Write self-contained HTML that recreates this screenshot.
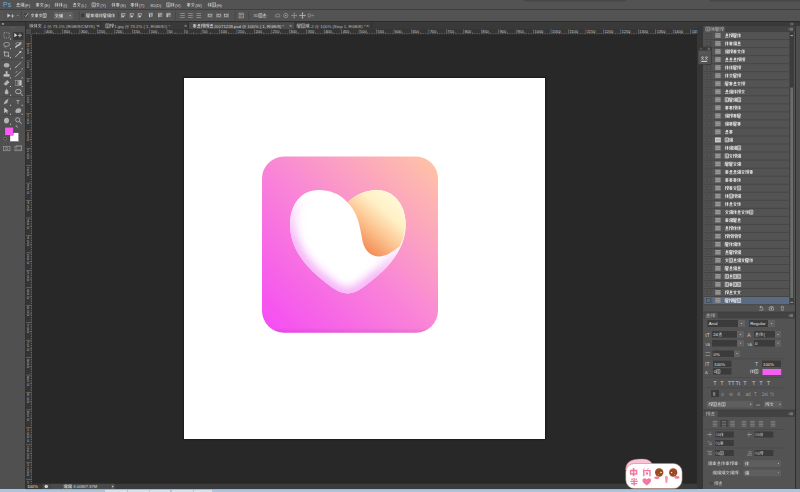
<!DOCTYPE html><html><head><meta charset="utf-8"><style>
html,body{margin:0;padding:0;}
body{width:800px;height:492px;overflow:hidden;position:relative;background:#282828;font-family:"Liberation Sans",sans-serif;}
div{position:absolute;box-sizing:border-box;}
svg{position:absolute;left:0;top:0;}
text{font-family:"Liberation Sans",sans-serif;}
</style></head><body>
<div style="left:0px;top:0px;width:800px;height:9.4px;background:#535353"></div>
<div style="left:0px;top:9.4px;width:800px;height:0.9px;background:#3f3f3f"></div>
<div style="left:0px;top:10.3px;width:800px;height:11px;background:#535353"></div>
<div style="left:0px;top:21.3px;width:800px;height:0.8px;background:#2c2c2c"></div>
<div style="left:0px;top:22px;width:25.2px;height:467.5px;background:#505050"></div>
<div style="left:0px;top:22px;width:25.2px;height:3.6px;background:#3a3a3a"></div>
<div style="left:25.2px;top:22px;width:0.8px;height:467.5px;background:#2f2f2f"></div>
<div style="left:26px;top:22px;width:671px;height:7px;background:#393939"></div>
<div style="left:26px;top:29px;width:5.3px;height:5.4px;background:#4a4a4a"></div>
<div style="left:31.3px;top:29px;width:666.7px;height:5.4px;background:#353535"></div>
<div style="left:26px;top:34.4px;width:6px;height:449.5px;background:#353535"></div>
<div style="left:184px;top:78.4px;width:361px;height:361px;background:#ffffff;box-shadow:0 0 1.5px 1px rgba(0,0,0,.35)"></div>
<div style="left:26px;top:483.7px;width:671px;height:5.6px;background:#3b3b3b"></div>
<div style="left:696.5px;top:22px;width:6.8px;height:467.5px;background:#363636"></div>
<div style="left:703.3px;top:22px;width:92px;height:467.5px;background:#535353"></div>
<div style="left:795px;top:26px;width:1px;height:463.5px;background:#2f2f2f"></div>
<div style="left:796px;top:26px;width:4px;height:463.5px;background:#4e4e4e"></div>
<div style="left:697px;top:22px;width:103px;height:4px;background:#393939"></div>
<div style="left:0px;top:489.2px;width:800px;height:2.8px;background:#aac5df"></div>
<svg width="800" height="492" viewBox="0 0 800 492">
<defs>
<linearGradient id="ig" x1="262" y1="333" x2="438" y2="156" gradientUnits="userSpaceOnUse">
<stop offset="0" stop-color="#f54af5"/>
<stop offset="0.5" stop-color="#f986d6"/>
<stop offset="1" stop-color="#ffc6a4"/>
</linearGradient>
<linearGradient id="og" x1="404" y1="203" x2="363" y2="251" gradientUnits="userSpaceOnUse">
<stop offset="0" stop-color="#fff9d8"/>
<stop offset="0.3" stop-color="#fff0c6"/>
<stop offset="0.62" stop-color="#fcc490"/>
<stop offset="1" stop-color="#f4864e"/>
</linearGradient>
<linearGradient id="ish" x1="0" y1="328" x2="0" y2="333" gradientUnits="userSpaceOnUse">
<stop offset="0" stop-color="#000" stop-opacity="0"/>
<stop offset="1" stop-color="#6a006a" stop-opacity=".12"/>
</linearGradient>
<clipPath id="hc"><path d="M347.5 202.5 C340 193.5 329 190 318.5 190 C301.5 190 290 204 290 224.5 C290 251 309 271 333 288 C339 291.8 343 293.4 347.5 293.4 C353 293.3 357 291.5 362 288 C386 271 405.8 251 405.8 224.5 C405.8 204 393 190 377 190 C365 190 355 195 347.5 202.5 Z"/></clipPath>
<linearGradient id="mg" x1="365" y1="205" x2="330" y2="285" gradientUnits="userSpaceOnUse">
<stop offset="0" stop-color="#000"/>
<stop offset="0.2" stop-color="#000"/>
<stop offset="0.7" stop-color="#fff"/>
<stop offset="1" stop-color="#fff"/>
</linearGradient>
<mask id="hm" maskUnits="userSpaceOnUse" x="280" y="180" width="140" height="130"><rect x="280" y="180" width="140" height="130" fill="url(#mg)"/></mask>
<filter id="hb" x="-20%" y="-20%" width="140%" height="140%"><feGaussianBlur stdDeviation="4.2"/></filter>
</defs>
<filter id="soft" x="-5%" y="-5%" width="110%" height="110%"><feGaussianBlur stdDeviation=".45"/></filter>
<g filter="url(#soft)">
<rect x="262" y="156.5" width="176" height="176.2" rx="22" ry="22" fill="url(#ig)"/>
<rect x="262" y="156.5" width="176" height="176.2" rx="22" ry="22" fill="url(#ish)"/>
<path d="M347.5 202.5 C340 193.5 329 190 318.5 190 C301.5 190 290 204 290 224.5 C290 251 309 271 333 288 C339 291.8 343 293.4 347.5 293.4 C353 293.3 357 291.5 362 288 C386 271 405.8 251 405.8 224.5 C405.8 204 393 190 377 190 C365 190 355 195 347.5 202.5 Z" fill="#ffffff"/>
<g clip-path="url(#hc)"><g mask="url(#hm)"><path d="M347.5 202.5 C340 193.5 329 190 318.5 190 C301.5 190 290 204 290 224.5 C290 251 309 271 333 288 C339 291.8 343 293.4 347.5 293.4 C353 293.3 357 291.5 362 288 C386 271 405.8 251 405.8 224.5 C405.8 204 393 190 377 190 C365 190 355 195 347.5 202.5 Z" fill="none" stroke="#f5b0f8" stroke-width="12" filter="url(#hb)"/></g></g>
<path d="M347.5 202.5 C355 195 365 190 377 190 C393 190 405.5 204 405.5 223 C405.5 232 403.5 240 399.5 246.5 C393 251.5 386 256.5 378 256.5 C370 256 365 250 363 243 C361 234 360 224 356 215 C354 210 351 206 347.5 202.5 Z" fill="url(#og)"/>
</g>

<rect x="524.00" y="0.00" width="102.00" height="1.20" fill="#474747" />
<rect x="524.00" y="1.20" width="102.00" height="0.60" fill="#4d4d4d" />
<rect x="709.70" y="0.00" width="90.30" height="1.20" fill="#474747" />
<rect x="709.70" y="1.20" width="90.30" height="0.60" fill="#4d4d4d" />
<text x="2.90" y="7.30" font-size="6.8" fill="#6aaee6" letter-spacing=".35">Ps</text>
<path d="M18.10 2.80 L18.10 4.40M17.25 3.52 L19.46 3.52M17.08 4.40 L19.63 4.40M17.83 4.40 L17.42 5.60M18.85 4.40 L18.85 5.60M16.40 4.20 L16.91 4.80M16.40 6.48 L19.80 6.60M21.62 2.80 L20.60 4.40 L21.79 4.80 L20.60 6.80M22.30 3.12 L24.00 3.12 L24.00 4.48 L22.30 4.48 L22.30 3.12M22.30 5.20 L22.30 6.80M22.30 5.20 L24.00 5.20 L24.00 6.80M23.15 5.20 L23.15 6.80" stroke="#e8e8e8" stroke-width="0.57" opacity="0.88" fill="none"/>
<text x="24.70" y="6.60" font-size="4.2" fill="#d8d8d8" >(F)</text>
<path d="M35.90 3.60 L39.30 3.60M37.60 2.80 L37.60 6.80M36.41 4.60 L38.79 4.60 L38.79 6.00 L36.41 6.00 L36.41 4.60M41.80 2.80 L41.80 3.60M40.10 3.80 L43.50 3.80M40.78 4.40 L42.99 6.80M42.82 4.40 L40.61 6.80" stroke="#e8e8e8" stroke-width="0.57" opacity="0.88" fill="none"/>
<text x="44.20" y="6.60" font-size="4.2" fill="#d8d8d8" >(E)</text>
<path d="M55.92 2.80 L54.90 4.60M55.41 4.00 L55.41 6.80M56.26 4.00 L58.30 4.00M56.43 5.40 L58.30 5.40M57.35 2.80 L57.35 6.80M60.12 2.80 L59.10 4.60M59.61 4.00 L59.61 6.80M60.46 4.00 L62.50 4.00M60.63 5.40 L62.50 5.40M61.55 2.80 L61.55 6.80" stroke="#e8e8e8" stroke-width="0.57" opacity="0.88" fill="none"/>
<text x="63.20" y="6.60" font-size="4.2" fill="#d8d8d8" >(I)</text>
<path d="M74.60 2.80 L74.60 4.40M73.75 3.52 L75.96 3.52M73.58 4.40 L76.13 4.40M74.33 4.40 L73.92 5.60M75.35 4.40 L75.35 5.60M72.90 4.20 L73.41 4.80M72.90 6.48 L76.30 6.60M78.80 2.80 L78.80 3.60M77.10 3.80 L80.50 3.80M77.78 4.40 L79.99 6.80M79.82 4.40 L77.61 6.80" stroke="#e8e8e8" stroke-width="0.57" opacity="0.88" fill="none"/>
<text x="81.20" y="6.60" font-size="4.2" fill="#d8d8d8" >(L)</text>
<path d="M92.00 2.80 L95.40 2.80 L95.40 6.80 L92.00 6.80 L92.00 2.80M93.02 3.92 L94.38 3.92M92.85 4.80 L94.55 5.52M93.19 6.08 L94.21 6.08M97.90 2.80 L97.90 3.60M96.20 3.80 L99.60 3.80M96.88 4.40 L99.09 6.80M98.92 4.40 L96.71 6.80" stroke="#e8e8e8" stroke-width="0.57" opacity="0.88" fill="none"/>
<text x="100.30" y="6.60" font-size="4.2" fill="#d8d8d8" >(Y)</text>
<path d="M112.92 2.80 L111.90 4.60M112.41 4.00 L112.41 6.80M113.26 4.00 L115.30 4.00M113.43 5.40 L115.30 5.40M114.35 2.80 L114.35 6.80M116.10 3.60 L119.50 3.60M117.80 2.80 L117.80 6.80M116.61 4.60 L118.99 4.60 L118.99 6.00 L116.61 6.00 L116.61 4.60" stroke="#e8e8e8" stroke-width="0.57" opacity="0.88" fill="none"/>
<text x="120.20" y="6.60" font-size="4.2" fill="#d8d8d8" >(S)</text>
<path d="M130.70 3.60 L134.10 3.60M132.40 2.80 L132.40 6.80M131.21 4.60 L133.59 4.60 L133.59 6.00 L131.21 6.00 L131.21 4.60M135.92 2.80 L134.90 4.60M135.41 4.00 L135.41 6.80M136.26 4.00 L138.30 4.00M136.43 5.40 L138.30 5.40M137.35 2.80 L137.35 6.80" stroke="#e8e8e8" stroke-width="0.57" opacity="0.88" fill="none"/>
<text x="139.00" y="6.60" font-size="4.2" fill="#d8d8d8" >(T)</text>
<path d="M166.70 2.80 L170.10 2.80 L170.10 6.80 L166.70 6.80 L166.70 2.80M167.72 3.92 L169.08 3.92M167.55 4.80 L169.25 5.52M167.89 6.08 L168.91 6.08M171.92 2.80 L170.90 4.60M171.41 4.00 L171.41 6.80M172.26 4.00 L174.30 4.00M172.43 5.40 L174.30 5.40M173.35 2.80 L173.35 6.80" stroke="#e8e8e8" stroke-width="0.57" opacity="0.88" fill="none"/>
<text x="175.00" y="6.60" font-size="4.2" fill="#d8d8d8" >(V)</text>
<path d="M186.90 3.60 L190.30 3.60M188.60 2.80 L188.60 6.80M187.41 4.60 L189.79 4.60 L189.79 6.00 L187.41 6.00 L187.41 4.60M192.80 2.80 L192.80 3.60M191.10 3.80 L194.50 3.80M191.78 4.40 L193.99 6.80M193.82 4.40 L191.61 6.80" stroke="#e8e8e8" stroke-width="0.57" opacity="0.88" fill="none"/>
<text x="195.20" y="6.60" font-size="4.2" fill="#d8d8d8" >(W)</text>
<path d="M208.92 2.80 L207.90 4.60M208.41 4.00 L208.41 6.80M209.26 4.00 L211.30 4.00M209.43 5.40 L211.30 5.40M210.35 2.80 L210.35 6.80M212.10 2.80 L215.50 2.80 L215.50 6.80 L212.10 6.80 L212.10 2.80M213.12 3.92 L214.48 3.92M212.95 4.80 L214.65 5.52M213.29 6.08 L214.31 6.08" stroke="#e8e8e8" stroke-width="0.57" opacity="0.88" fill="none"/>
<text x="216.20" y="6.60" font-size="4.2" fill="#d8d8d8" >(H)</text>
<text x="150.00" y="6.60" font-size="4.2" fill="#d8d8d8" >3D(D)</text>
<rect x="1.60" y="11.70" width="0.70" height="0.60" fill="#777" />
<rect x="1.60" y="13.70" width="0.70" height="0.60" fill="#777" />
<rect x="1.60" y="15.70" width="0.70" height="0.60" fill="#777" />
<rect x="1.60" y="17.70" width="0.70" height="0.60" fill="#777" />
<rect x="1.60" y="19.70" width="0.70" height="0.60" fill="#777" />
<path d="M7.4 13.4 L7.4 17.8 L10.4 15.6 Z" fill="#c8c8c8"/>
<path d="M12.5 14.2v3.6M10.7 16h3.6" stroke="#c8c8c8" stroke-width=".7"/>
<path d="M16.8 15.4h1.8" stroke="#aaa" stroke-width=".6"/>
<rect x="21.30" y="11.20" width="0.60" height="9.00" fill="#404040" />
<rect x="24.00" y="13.50" width="3.60" height="3.80" fill="#3c3c3c" />
<path d="M24.6 15.4 L25.8 16.6 L28 13.4" stroke="#d8d8d8" stroke-width=".7" fill="none"/>
<path d="M32.60 13.60 L32.60 14.36M31.00 14.55 L34.20 14.55M31.64 15.12 L33.72 17.40M33.56 15.12 L31.48 17.40M35.00 14.36 L38.20 14.36M36.60 13.60 L36.60 17.40M35.48 15.31 L37.72 15.31 L37.72 16.64 L35.48 16.64 L35.48 15.31M40.60 13.60 L40.60 14.36M39.00 14.55 L42.20 14.55M39.64 15.12 L41.72 17.40M41.56 15.12 L39.48 17.40M43.00 13.60 L46.20 13.60 L46.20 17.40 L43.00 17.40 L43.00 13.60M43.96 14.66 L45.24 14.66M43.80 15.50 L45.40 16.18M44.12 16.72 L45.08 16.72" stroke="#e6e6e6" stroke-width="0.57" opacity="0.94" fill="none"/>
<rect x="54.30" y="12.50" width="18.20" height="6.70" fill="#707070" />
<rect x="54.70" y="12.90" width="17.40" height="5.90" fill="#626262" />
<path d="M56.80 14.00 L56.80 14.72M55.20 14.90 L58.40 14.90M55.84 15.44 L57.92 17.60M57.76 15.44 L55.68 17.60M60.16 14.00 L59.20 15.44 L60.32 15.80 L59.20 17.60M60.80 14.29 L62.40 14.29 L62.40 15.51 L60.80 15.51 L60.80 14.29M60.80 16.16 L60.80 17.60M60.80 16.16 L62.40 16.16 L62.40 17.60M61.60 16.16 L61.60 17.60" stroke="#f0f0f0" stroke-width="0.57" opacity="1.00" fill="none"/>
<path d="M69.3 15.3 L71 15.3 L70.15 16.6 Z" fill="#ddd"/>
<rect x="78.80" y="11.20" width="0.60" height="9.00" fill="#404040" />
<rect x="81.30" y="13.60" width="3.00" height="3.40" fill="#3a3a3a" />
<path d="M86.40 13.79 L89.58 13.79 L89.58 14.93 L86.40 14.93M86.40 13.79 L86.40 17.40M87.07 15.69 L89.58 15.69M87.41 16.56 L89.58 16.56M88.24 15.69 L87.57 17.40 L89.58 17.40M90.55 14.36 L93.90 14.36M92.23 13.60 L92.23 17.40M91.05 15.31 L93.40 15.31 L93.40 16.64 L91.05 16.64 L91.05 15.31M95.70 13.60 L94.70 15.12 L95.87 15.50 L94.70 17.40M96.38 13.90 L98.05 13.90 L98.05 15.20 L96.38 15.20 L96.38 13.90M96.38 15.88 L96.38 17.40M96.38 15.88 L98.05 15.88 L98.05 17.40M97.21 15.88 L97.21 17.40M99.86 13.60 L98.85 15.31M99.35 14.74 L99.35 17.40M100.19 14.74 L102.20 14.74M100.36 16.07 L102.20 16.07M101.26 13.60 L101.26 17.40M103.00 13.79 L106.18 13.79 L106.18 14.93 L103.00 14.93M103.00 13.79 L103.00 17.40M103.67 15.69 L106.18 15.69M104.01 16.56 L106.18 16.56M104.84 15.69 L104.17 17.40 L106.18 17.40M108.16 13.60 L107.15 15.12 L108.32 15.50 L107.15 17.40M108.83 13.90 L110.50 13.90 L110.50 15.20 L108.83 15.20 L108.83 13.90M108.83 15.88 L108.83 17.40M108.83 15.88 L110.50 15.88 L110.50 17.40M109.66 15.88 L109.66 17.40M112.31 13.60 L111.30 15.31M111.80 14.74 L111.80 17.40M112.64 14.74 L114.65 14.74M112.81 16.07 L114.65 16.07M113.71 13.60 L113.71 17.40" stroke="#e6e6e6" stroke-width="0.57" opacity="0.94" fill="none"/>
<rect x="118.00" y="11.20" width="0.60" height="9.00" fill="#404040" />
<path d="M121.45 13.3v4.4" stroke="#c8c8c8" stroke-width=".6"/>
<rect x="122.15" y="13.70" width="2.80" height="1.50" fill="none" stroke="#c8c8c8" stroke-width=".5"/>
<rect x="122.15" y="15.90" width="2.00" height="1.40" fill="#c8c8c8" />
<path d="M130.2 13.3v4.4" stroke="#c8c8c8" stroke-width=".6"/>
<rect x="130.90" y="13.70" width="2.80" height="1.50" fill="none" stroke="#c8c8c8" stroke-width=".5"/>
<rect x="130.90" y="15.90" width="2.00" height="1.40" fill="#c8c8c8" />
<path d="M138.2 13.3v4.4" stroke="#c8c8c8" stroke-width=".6"/>
<rect x="138.90" y="13.70" width="2.80" height="1.50" fill="none" stroke="#c8c8c8" stroke-width=".5"/>
<rect x="138.90" y="15.90" width="2.00" height="1.40" fill="#c8c8c8" />
<path d="M148.45 13.3h4.6" stroke="#c8c8c8" stroke-width=".6"/>
<rect x="148.95" y="14.00" width="1.40" height="3.20" fill="#c8c8c8" />
<rect x="151.25" y="14.00" width="1.40" height="2.40" fill="none" stroke="#c8c8c8" stroke-width=".5"/>
<path d="M157.7 13.3h4.6" stroke="#c8c8c8" stroke-width=".6"/>
<rect x="158.20" y="14.00" width="1.40" height="3.20" fill="#c8c8c8" />
<rect x="160.50" y="14.00" width="1.40" height="2.40" fill="none" stroke="#c8c8c8" stroke-width=".5"/>
<path d="M165.95 13.3h4.6" stroke="#c8c8c8" stroke-width=".6"/>
<rect x="166.45" y="14.00" width="1.40" height="3.20" fill="#c8c8c8" />
<rect x="168.75" y="14.00" width="1.40" height="2.40" fill="none" stroke="#c8c8c8" stroke-width=".5"/>
<rect x="175.20" y="11.20" width="0.60" height="9.00" fill="#404040" />
<path d="M180.2 13.5h4.6M180.2 15.5h4.6M180.2 17.5h4.6" stroke="#c8c8c8" stroke-width=".55" opacity=".8"/>
<path d="M188.2 13.5h4.6M188.2 15.5h4.6M188.2 17.5h4.6" stroke="#c8c8c8" stroke-width=".55" opacity=".8"/>
<path d="M196.45 13.5h4.6M196.45 15.5h4.6M196.45 17.5h4.6" stroke="#c8c8c8" stroke-width=".55" opacity=".8"/>
<path d="M208 13.3v4.4M210 13.3v4.4M212 13.3v4.4" stroke="#c8c8c8" stroke-width=".55" opacity=".8"/>
<rect x="208.40" y="14.50" width="3.20" height="2.00" fill="none" stroke="#c8c8c8" stroke-width=".45"/>
<path d="M216.75 13.3v4.4M218.75 13.3v4.4M220.75 13.3v4.4" stroke="#c8c8c8" stroke-width=".55" opacity=".8"/>
<rect x="217.15" y="14.50" width="3.20" height="2.00" fill="none" stroke="#c8c8c8" stroke-width=".45"/>
<path d="M224.25 13.3v4.4M226.25 13.3v4.4M228.25 13.3v4.4" stroke="#c8c8c8" stroke-width=".55" opacity=".8"/>
<rect x="224.65" y="14.50" width="3.20" height="2.00" fill="none" stroke="#c8c8c8" stroke-width=".45"/>
<rect x="234.80" y="11.20" width="0.60" height="9.00" fill="#404040" />
<rect x="239.05" y="13.10" width="4.40" height="4.80" fill="none" stroke="#c8c8c8" stroke-width=".5"/>
<path d="M239.95 14.5h2.6M239.95 16.1h2.6" stroke="#c8c8c8" stroke-width=".5"/>
<rect x="248.60" y="11.20" width="0.60" height="9.00" fill="#404040" />
<text x="253.50" y="17.20" font-size="3.6" fill="#cfcfcf" >3D</text>
<path d="M258.80 13.60 L262.00 13.60 L262.00 17.40 L258.80 17.40 L258.80 13.60M259.76 14.66 L261.04 14.66M259.60 15.50 L261.20 16.18M259.92 16.72 L260.88 16.72M264.40 13.60 L264.40 15.12M263.60 14.28 L265.68 14.28M263.44 15.12 L265.84 15.12M264.14 15.12 L263.76 16.26M265.10 15.12 L265.10 16.26M262.80 14.93 L263.28 15.50M262.80 17.10 L266.00 17.21" stroke="#e6e6e6" stroke-width="0.57" opacity="0.88" fill="none"/>
<text x="266.80" y="17.20" font-size="3.6" fill="#cfcfcf" >:</text>
<path d="M275.3 16.6 q0-2.6 2.4-2.6 q2.4 0 2.4 2.2 M275.6 16.8h4.6" stroke="#a8a8a8" stroke-width=".6" fill="none"/>
<circle cx="285.75" cy="15.5" r="2.2" fill="none" stroke="#a8a8a8" stroke-width=".6"/><circle cx="285.75" cy="15.5" r=".8" fill="#a8a8a8"/>
<path d="M294.25 13v5M291.75 15.5h5" stroke="#a8a8a8" stroke-width=".6"/><path d="M293.5 13.6l.75-.9.75.9M293.5 17.4l.75.9.75-.9M292.3 14.8l-.9.7.9.7M296.2 14.8l.9.7-.9.7" stroke="#a8a8a8" stroke-width=".45" fill="none"/>
<path d="M302.5 12.6v5.8M299.6 15.5h5.8" stroke="#b8b8b8" stroke-width=".8"/><path d="M301.6 13.5l.9-1 .9 1M301.6 17.5l.9 1 .9-1M300.5 14.6l-1 .9 1 .9M304.5 14.6l1 .9-1 .9" stroke="#b8b8b8" stroke-width=".5" fill="none"/>
<path d="M308.2 14h2.2v3h-2.2zM311.2 15.5h2.4M312.8 14.6l.9.9-.9.9" stroke="#a8a8a8" stroke-width=".5" fill="none"/>
<rect x="100.40" y="22.60" width="0.60" height="6.00" fill="#2a2a2a" />
<path d="M30.62 23.90 L29.60 25.65M30.11 25.07 L30.11 27.80M30.96 25.07 L33.00 25.07M31.13 26.43 L33.00 26.43M32.05 23.90 L32.05 27.80M34.82 23.90 L33.80 25.65M34.31 25.07 L34.31 27.80M35.16 25.07 L37.20 25.07M35.33 26.43 L37.20 26.43M36.25 23.90 L36.25 27.80M39.70 23.90 L39.70 24.68M38.00 24.88 L41.40 24.88M38.68 25.46 L40.89 27.80M40.72 25.46 L38.51 27.80" stroke="#e0e0e0" stroke-width="0.57" opacity="0.81" fill="none"/>
<text x="42.30" y="27.70" font-size="4.25" fill="#b8b8b8" >-1 @ 73.1% (RGB/8/CMYK) *</text>
<path d="M97.5 24.9 l2 2 M99.5 24.9 l-2 2" stroke="#bbb" stroke-width=".55"/>
<rect x="188.40" y="22.60" width="0.60" height="6.00" fill="#2a2a2a" />
<path d="M105.80 23.90 L109.20 23.90 L109.20 27.80 L105.80 27.80 L105.80 23.90M106.82 24.99 L108.18 24.99M106.65 25.85 L108.35 26.55M106.99 27.10 L108.01 27.10M110.34 23.90 L110.34 27.80M110.34 25.07 L111.53 25.07M111.87 24.09 L113.40 24.09 L113.40 25.85 L111.87 25.85 L111.87 24.09M111.87 26.82 L113.40 26.82M112.65 25.85 L112.65 27.80" stroke="#e0e0e0" stroke-width="0.57" opacity="0.81" fill="none"/>
<text x="114.30" y="27.70" font-size="4.25" fill="#b8b8b8" >1.jpg @ 73.2% (   1, RGB/8#) *</text>
<path d="M184.6 24.9 l2 2 M186.6 24.9 l-2 2" stroke="#bbb" stroke-width=".55"/>
<rect x="189.00" y="22.20" width="105.00" height="6.80" fill="#4a4a4a" />
<path d="M192.90 24.68 L196.30 24.68M194.60 23.90 L194.60 27.80M193.41 25.65 L195.79 25.65 L195.79 27.02 L193.41 27.02 L193.41 25.65M198.80 23.90 L198.80 25.46M197.95 24.60 L200.16 24.60M197.78 25.46 L200.33 25.46M198.53 25.46 L198.12 26.63M199.55 25.46 L199.55 26.63M197.10 25.26 L197.61 25.85M197.10 27.49 L200.50 27.60M201.64 23.90 L201.64 27.80M201.64 25.07 L202.83 25.07M203.17 24.09 L204.70 24.09 L204.70 25.85 L203.17 25.85 L203.17 24.09M203.17 26.82 L204.70 26.82M203.95 25.85 L203.95 27.80M205.84 23.90 L205.84 27.80M205.84 25.07 L207.03 25.07M207.37 24.09 L208.90 24.09 L208.90 25.85 L207.37 25.85 L207.37 24.09M207.37 26.82 L208.90 26.82M208.15 25.85 L208.15 27.80M211.40 23.90 L211.40 25.46M210.55 24.60 L212.76 24.60M210.38 25.46 L212.93 25.46M211.13 25.46 L210.72 26.63M212.15 25.46 L212.15 26.63M209.70 25.26 L210.21 25.85M209.70 27.49 L213.10 27.60" stroke="#e0e0e0" stroke-width="0.57" opacity="1.00" fill="none"/>
<text x="214.00" y="27.70" font-size="4.25" fill="#d4d4d4" >20171228.psd @ 100% (    1, RGB/8) *</text>
<path d="M289.6 24.9 l2 2 M291.6 24.9 l-2 2" stroke="#bbb" stroke-width=".55"/>
<rect x="371.60" y="22.60" width="0.60" height="6.00" fill="#2a2a2a" />
<path d="M297.20 24.09 L300.43 24.09 L300.43 25.26 L297.20 25.26M297.20 24.09 L297.20 27.80M297.88 26.04 L300.43 26.04M298.22 26.94 L300.43 26.94M299.07 26.04 L298.39 27.80 L300.43 27.80M301.40 23.90 L304.80 23.90 L304.80 27.80 L301.40 27.80 L301.40 23.90M302.42 24.99 L303.78 24.99M302.25 25.85 L303.95 26.55M302.59 27.10 L303.61 27.10M306.62 23.90 L305.60 25.46 L306.79 25.85 L305.60 27.80M307.30 24.21 L309.00 24.21 L309.00 25.54 L307.30 25.54 L307.30 24.21M307.30 26.24 L307.30 27.80M307.30 26.24 L309.00 26.24 L309.00 27.80M308.15 26.24 L308.15 27.80" stroke="#e0e0e0" stroke-width="0.57" opacity="0.81" fill="none"/>
<text x="309.90" y="27.70" font-size="4.25" fill="#b8b8b8" >-2 @ 100% (Step 1, RGB/8) *</text>
<path d="M366.6 24.9 l2 2 M368.6 24.9 l-2 2" stroke="#bbb" stroke-width=".55"/>
<defs><clipPath id="rc"><rect x="31.3" y="29" width="666" height="5.4"/></clipPath><clipPath id="rl"><rect x="26" y="34.4" width="6" height="449.5"/></clipPath></defs><g clip-path="url(#rc)">
<rect x="32.49" y="33.30" width="0.60" height="1.10" fill="#858585" />
<rect x="34.23" y="33.30" width="0.60" height="1.10" fill="#858585" />
<rect x="35.98" y="32.50" width="0.60" height="1.90" fill="#8e8e8e" />
<rect x="37.72" y="33.30" width="0.60" height="1.10" fill="#858585" />
<rect x="39.47" y="33.30" width="0.60" height="1.10" fill="#858585" />
<rect x="41.21" y="33.30" width="0.60" height="1.10" fill="#858585" />
<rect x="42.96" y="33.30" width="0.60" height="1.10" fill="#858585" />
<rect x="44.75" y="29.30" width="0.50" height="5.10" fill="#8a8a8a" />
<rect x="46.45" y="33.30" width="0.60" height="1.10" fill="#858585" />
<rect x="48.19" y="33.30" width="0.60" height="1.10" fill="#858585" />
<rect x="49.94" y="33.30" width="0.60" height="1.10" fill="#858585" />
<rect x="51.68" y="33.30" width="0.60" height="1.10" fill="#858585" />
<rect x="53.43" y="32.50" width="0.60" height="1.90" fill="#8e8e8e" />
<rect x="55.17" y="33.30" width="0.60" height="1.10" fill="#858585" />
<rect x="56.92" y="33.30" width="0.60" height="1.10" fill="#858585" />
<rect x="58.66" y="33.30" width="0.60" height="1.10" fill="#858585" />
<rect x="60.41" y="33.30" width="0.60" height="1.10" fill="#858585" />
<text x="46.00" y="32.60" font-size="3.9" fill="#c8c8c8" >400</text>
<rect x="62.20" y="29.30" width="0.50" height="5.10" fill="#8a8a8a" />
<rect x="63.90" y="33.30" width="0.60" height="1.10" fill="#858585" />
<rect x="65.64" y="33.30" width="0.60" height="1.10" fill="#858585" />
<rect x="67.39" y="33.30" width="0.60" height="1.10" fill="#858585" />
<rect x="69.13" y="33.30" width="0.60" height="1.10" fill="#858585" />
<rect x="70.88" y="32.50" width="0.60" height="1.90" fill="#8e8e8e" />
<rect x="72.62" y="33.30" width="0.60" height="1.10" fill="#858585" />
<rect x="74.37" y="33.30" width="0.60" height="1.10" fill="#858585" />
<rect x="76.11" y="33.30" width="0.60" height="1.10" fill="#858585" />
<rect x="77.86" y="33.30" width="0.60" height="1.10" fill="#858585" />
<text x="63.45" y="32.60" font-size="3.9" fill="#c8c8c8" >350</text>
<rect x="79.65" y="29.30" width="0.50" height="5.10" fill="#8a8a8a" />
<rect x="81.35" y="33.30" width="0.60" height="1.10" fill="#858585" />
<rect x="83.09" y="33.30" width="0.60" height="1.10" fill="#858585" />
<rect x="84.84" y="33.30" width="0.60" height="1.10" fill="#858585" />
<rect x="86.58" y="33.30" width="0.60" height="1.10" fill="#858585" />
<rect x="88.33" y="32.50" width="0.60" height="1.90" fill="#8e8e8e" />
<rect x="90.07" y="33.30" width="0.60" height="1.10" fill="#858585" />
<rect x="91.82" y="33.30" width="0.60" height="1.10" fill="#858585" />
<rect x="93.56" y="33.30" width="0.60" height="1.10" fill="#858585" />
<rect x="95.31" y="33.30" width="0.60" height="1.10" fill="#858585" />
<text x="80.90" y="32.60" font-size="3.9" fill="#c8c8c8" >300</text>
<rect x="97.10" y="29.30" width="0.50" height="5.10" fill="#8a8a8a" />
<rect x="98.80" y="33.30" width="0.60" height="1.10" fill="#858585" />
<rect x="100.54" y="33.30" width="0.60" height="1.10" fill="#858585" />
<rect x="102.28" y="33.30" width="0.60" height="1.10" fill="#858585" />
<rect x="104.03" y="33.30" width="0.60" height="1.10" fill="#858585" />
<rect x="105.77" y="32.50" width="0.60" height="1.90" fill="#8e8e8e" />
<rect x="107.52" y="33.30" width="0.60" height="1.10" fill="#858585" />
<rect x="109.27" y="33.30" width="0.60" height="1.10" fill="#858585" />
<rect x="111.01" y="33.30" width="0.60" height="1.10" fill="#858585" />
<rect x="112.75" y="33.30" width="0.60" height="1.10" fill="#858585" />
<text x="98.35" y="32.60" font-size="3.9" fill="#c8c8c8" >250</text>
<rect x="114.55" y="29.30" width="0.50" height="5.10" fill="#8a8a8a" />
<rect x="116.25" y="33.30" width="0.60" height="1.10" fill="#858585" />
<rect x="117.99" y="33.30" width="0.60" height="1.10" fill="#858585" />
<rect x="119.73" y="33.30" width="0.60" height="1.10" fill="#858585" />
<rect x="121.48" y="33.30" width="0.60" height="1.10" fill="#858585" />
<rect x="123.22" y="32.50" width="0.60" height="1.90" fill="#8e8e8e" />
<rect x="124.97" y="33.30" width="0.60" height="1.10" fill="#858585" />
<rect x="126.72" y="33.30" width="0.60" height="1.10" fill="#858585" />
<rect x="128.46" y="33.30" width="0.60" height="1.10" fill="#858585" />
<rect x="130.20" y="33.30" width="0.60" height="1.10" fill="#858585" />
<text x="115.80" y="32.60" font-size="3.9" fill="#c8c8c8" >200</text>
<rect x="132.00" y="29.30" width="0.50" height="5.10" fill="#8a8a8a" />
<rect x="133.69" y="33.30" width="0.60" height="1.10" fill="#858585" />
<rect x="135.44" y="33.30" width="0.60" height="1.10" fill="#858585" />
<rect x="137.19" y="33.30" width="0.60" height="1.10" fill="#858585" />
<rect x="138.93" y="33.30" width="0.60" height="1.10" fill="#858585" />
<rect x="140.67" y="32.50" width="0.60" height="1.90" fill="#8e8e8e" />
<rect x="142.42" y="33.30" width="0.60" height="1.10" fill="#858585" />
<rect x="144.16" y="33.30" width="0.60" height="1.10" fill="#858585" />
<rect x="145.91" y="33.30" width="0.60" height="1.10" fill="#858585" />
<rect x="147.65" y="33.30" width="0.60" height="1.10" fill="#858585" />
<text x="133.25" y="32.60" font-size="3.9" fill="#c8c8c8" >150</text>
<rect x="149.45" y="29.30" width="0.50" height="5.10" fill="#8a8a8a" />
<rect x="151.14" y="33.30" width="0.60" height="1.10" fill="#858585" />
<rect x="152.89" y="33.30" width="0.60" height="1.10" fill="#858585" />
<rect x="154.63" y="33.30" width="0.60" height="1.10" fill="#858585" />
<rect x="156.38" y="33.30" width="0.60" height="1.10" fill="#858585" />
<rect x="158.12" y="32.50" width="0.60" height="1.90" fill="#8e8e8e" />
<rect x="159.87" y="33.30" width="0.60" height="1.10" fill="#858585" />
<rect x="161.61" y="33.30" width="0.60" height="1.10" fill="#858585" />
<rect x="163.36" y="33.30" width="0.60" height="1.10" fill="#858585" />
<rect x="165.10" y="33.30" width="0.60" height="1.10" fill="#858585" />
<text x="150.70" y="32.60" font-size="3.9" fill="#c8c8c8" >100</text>
<rect x="166.90" y="29.30" width="0.50" height="5.10" fill="#8a8a8a" />
<rect x="168.59" y="33.30" width="0.60" height="1.10" fill="#858585" />
<rect x="170.34" y="33.30" width="0.60" height="1.10" fill="#858585" />
<rect x="172.08" y="33.30" width="0.60" height="1.10" fill="#858585" />
<rect x="173.83" y="33.30" width="0.60" height="1.10" fill="#858585" />
<rect x="175.57" y="32.50" width="0.60" height="1.90" fill="#8e8e8e" />
<rect x="177.32" y="33.30" width="0.60" height="1.10" fill="#858585" />
<rect x="179.06" y="33.30" width="0.60" height="1.10" fill="#858585" />
<rect x="180.81" y="33.30" width="0.60" height="1.10" fill="#858585" />
<rect x="182.56" y="33.30" width="0.60" height="1.10" fill="#858585" />
<text x="168.15" y="32.60" font-size="3.9" fill="#c8c8c8" >50</text>
<rect x="184.35" y="29.30" width="0.50" height="5.10" fill="#8a8a8a" />
<rect x="186.04" y="33.30" width="0.60" height="1.10" fill="#858585" />
<rect x="187.79" y="33.30" width="0.60" height="1.10" fill="#858585" />
<rect x="189.53" y="33.30" width="0.60" height="1.10" fill="#858585" />
<rect x="191.28" y="33.30" width="0.60" height="1.10" fill="#858585" />
<rect x="193.02" y="32.50" width="0.60" height="1.90" fill="#8e8e8e" />
<rect x="194.77" y="33.30" width="0.60" height="1.10" fill="#858585" />
<rect x="196.51" y="33.30" width="0.60" height="1.10" fill="#858585" />
<rect x="198.26" y="33.30" width="0.60" height="1.10" fill="#858585" />
<rect x="200.00" y="33.30" width="0.60" height="1.10" fill="#858585" />
<text x="185.60" y="32.60" font-size="3.9" fill="#c8c8c8" >0</text>
<rect x="201.80" y="29.30" width="0.50" height="5.10" fill="#8a8a8a" />
<rect x="203.49" y="33.30" width="0.60" height="1.10" fill="#858585" />
<rect x="205.24" y="33.30" width="0.60" height="1.10" fill="#858585" />
<rect x="206.98" y="33.30" width="0.60" height="1.10" fill="#858585" />
<rect x="208.73" y="33.30" width="0.60" height="1.10" fill="#858585" />
<rect x="210.47" y="32.50" width="0.60" height="1.90" fill="#8e8e8e" />
<rect x="212.22" y="33.30" width="0.60" height="1.10" fill="#858585" />
<rect x="213.96" y="33.30" width="0.60" height="1.10" fill="#858585" />
<rect x="215.71" y="33.30" width="0.60" height="1.10" fill="#858585" />
<rect x="217.45" y="33.30" width="0.60" height="1.10" fill="#858585" />
<text x="203.05" y="32.60" font-size="3.9" fill="#c8c8c8" >50</text>
<rect x="219.25" y="29.30" width="0.50" height="5.10" fill="#8a8a8a" />
<rect x="220.94" y="33.30" width="0.60" height="1.10" fill="#858585" />
<rect x="222.69" y="33.30" width="0.60" height="1.10" fill="#858585" />
<rect x="224.44" y="33.30" width="0.60" height="1.10" fill="#858585" />
<rect x="226.18" y="33.30" width="0.60" height="1.10" fill="#858585" />
<rect x="227.92" y="32.50" width="0.60" height="1.90" fill="#8e8e8e" />
<rect x="229.67" y="33.30" width="0.60" height="1.10" fill="#858585" />
<rect x="231.41" y="33.30" width="0.60" height="1.10" fill="#858585" />
<rect x="233.16" y="33.30" width="0.60" height="1.10" fill="#858585" />
<rect x="234.90" y="33.30" width="0.60" height="1.10" fill="#858585" />
<text x="220.50" y="32.60" font-size="3.9" fill="#c8c8c8" >100</text>
<rect x="236.70" y="29.30" width="0.50" height="5.10" fill="#8a8a8a" />
<rect x="238.39" y="33.30" width="0.60" height="1.10" fill="#858585" />
<rect x="240.14" y="33.30" width="0.60" height="1.10" fill="#858585" />
<rect x="241.88" y="33.30" width="0.60" height="1.10" fill="#858585" />
<rect x="243.63" y="33.30" width="0.60" height="1.10" fill="#858585" />
<rect x="245.37" y="32.50" width="0.60" height="1.90" fill="#8e8e8e" />
<rect x="247.12" y="33.30" width="0.60" height="1.10" fill="#858585" />
<rect x="248.86" y="33.30" width="0.60" height="1.10" fill="#858585" />
<rect x="250.61" y="33.30" width="0.60" height="1.10" fill="#858585" />
<rect x="252.35" y="33.30" width="0.60" height="1.10" fill="#858585" />
<text x="237.95" y="32.60" font-size="3.9" fill="#c8c8c8" >150</text>
<rect x="254.15" y="29.30" width="0.50" height="5.10" fill="#8a8a8a" />
<rect x="255.84" y="33.30" width="0.60" height="1.10" fill="#858585" />
<rect x="257.59" y="33.30" width="0.60" height="1.10" fill="#858585" />
<rect x="259.33" y="33.30" width="0.60" height="1.10" fill="#858585" />
<rect x="261.08" y="33.30" width="0.60" height="1.10" fill="#858585" />
<rect x="262.82" y="32.50" width="0.60" height="1.90" fill="#8e8e8e" />
<rect x="264.57" y="33.30" width="0.60" height="1.10" fill="#858585" />
<rect x="266.31" y="33.30" width="0.60" height="1.10" fill="#858585" />
<rect x="268.06" y="33.30" width="0.60" height="1.10" fill="#858585" />
<rect x="269.80" y="33.30" width="0.60" height="1.10" fill="#858585" />
<text x="255.40" y="32.60" font-size="3.9" fill="#c8c8c8" >200</text>
<rect x="271.60" y="29.30" width="0.50" height="5.10" fill="#8a8a8a" />
<rect x="273.30" y="33.30" width="0.60" height="1.10" fill="#858585" />
<rect x="275.04" y="33.30" width="0.60" height="1.10" fill="#858585" />
<rect x="276.79" y="33.30" width="0.60" height="1.10" fill="#858585" />
<rect x="278.53" y="33.30" width="0.60" height="1.10" fill="#858585" />
<rect x="280.28" y="32.50" width="0.60" height="1.90" fill="#8e8e8e" />
<rect x="282.02" y="33.30" width="0.60" height="1.10" fill="#858585" />
<rect x="283.76" y="33.30" width="0.60" height="1.10" fill="#858585" />
<rect x="285.51" y="33.30" width="0.60" height="1.10" fill="#858585" />
<rect x="287.25" y="33.30" width="0.60" height="1.10" fill="#858585" />
<text x="272.85" y="32.60" font-size="3.9" fill="#c8c8c8" >250</text>
<rect x="289.05" y="29.30" width="0.50" height="5.10" fill="#8a8a8a" />
<rect x="290.74" y="33.30" width="0.60" height="1.10" fill="#858585" />
<rect x="292.49" y="33.30" width="0.60" height="1.10" fill="#858585" />
<rect x="294.23" y="33.30" width="0.60" height="1.10" fill="#858585" />
<rect x="295.98" y="33.30" width="0.60" height="1.10" fill="#858585" />
<rect x="297.72" y="32.50" width="0.60" height="1.90" fill="#8e8e8e" />
<rect x="299.47" y="33.30" width="0.60" height="1.10" fill="#858585" />
<rect x="301.21" y="33.30" width="0.60" height="1.10" fill="#858585" />
<rect x="302.96" y="33.30" width="0.60" height="1.10" fill="#858585" />
<rect x="304.70" y="33.30" width="0.60" height="1.10" fill="#858585" />
<text x="290.30" y="32.60" font-size="3.9" fill="#c8c8c8" >300</text>
<rect x="306.50" y="29.30" width="0.50" height="5.10" fill="#8a8a8a" />
<rect x="308.19" y="33.30" width="0.60" height="1.10" fill="#858585" />
<rect x="309.94" y="33.30" width="0.60" height="1.10" fill="#858585" />
<rect x="311.69" y="33.30" width="0.60" height="1.10" fill="#858585" />
<rect x="313.43" y="33.30" width="0.60" height="1.10" fill="#858585" />
<rect x="315.18" y="32.50" width="0.60" height="1.90" fill="#8e8e8e" />
<rect x="316.92" y="33.30" width="0.60" height="1.10" fill="#858585" />
<rect x="318.66" y="33.30" width="0.60" height="1.10" fill="#858585" />
<rect x="320.41" y="33.30" width="0.60" height="1.10" fill="#858585" />
<rect x="322.15" y="33.30" width="0.60" height="1.10" fill="#858585" />
<text x="307.75" y="32.60" font-size="3.9" fill="#c8c8c8" >350</text>
<rect x="323.95" y="29.30" width="0.50" height="5.10" fill="#8a8a8a" />
<rect x="325.64" y="33.30" width="0.60" height="1.10" fill="#858585" />
<rect x="327.39" y="33.30" width="0.60" height="1.10" fill="#858585" />
<rect x="329.13" y="33.30" width="0.60" height="1.10" fill="#858585" />
<rect x="330.88" y="33.30" width="0.60" height="1.10" fill="#858585" />
<rect x="332.62" y="32.50" width="0.60" height="1.90" fill="#8e8e8e" />
<rect x="334.37" y="33.30" width="0.60" height="1.10" fill="#858585" />
<rect x="336.11" y="33.30" width="0.60" height="1.10" fill="#858585" />
<rect x="337.86" y="33.30" width="0.60" height="1.10" fill="#858585" />
<rect x="339.60" y="33.30" width="0.60" height="1.10" fill="#858585" />
<text x="325.20" y="32.60" font-size="3.9" fill="#c8c8c8" >400</text>
<rect x="341.40" y="29.30" width="0.50" height="5.10" fill="#8a8a8a" />
<rect x="343.09" y="33.30" width="0.60" height="1.10" fill="#858585" />
<rect x="344.84" y="33.30" width="0.60" height="1.10" fill="#858585" />
<rect x="346.58" y="33.30" width="0.60" height="1.10" fill="#858585" />
<rect x="348.33" y="33.30" width="0.60" height="1.10" fill="#858585" />
<rect x="350.07" y="32.50" width="0.60" height="1.90" fill="#8e8e8e" />
<rect x="351.82" y="33.30" width="0.60" height="1.10" fill="#858585" />
<rect x="353.56" y="33.30" width="0.60" height="1.10" fill="#858585" />
<rect x="355.31" y="33.30" width="0.60" height="1.10" fill="#858585" />
<rect x="357.05" y="33.30" width="0.60" height="1.10" fill="#858585" />
<text x="342.65" y="32.60" font-size="3.9" fill="#c8c8c8" >450</text>
<rect x="358.85" y="29.30" width="0.50" height="5.10" fill="#8a8a8a" />
<rect x="360.55" y="33.30" width="0.60" height="1.10" fill="#858585" />
<rect x="362.29" y="33.30" width="0.60" height="1.10" fill="#858585" />
<rect x="364.04" y="33.30" width="0.60" height="1.10" fill="#858585" />
<rect x="365.78" y="33.30" width="0.60" height="1.10" fill="#858585" />
<rect x="367.53" y="32.50" width="0.60" height="1.90" fill="#8e8e8e" />
<rect x="369.27" y="33.30" width="0.60" height="1.10" fill="#858585" />
<rect x="371.01" y="33.30" width="0.60" height="1.10" fill="#858585" />
<rect x="372.76" y="33.30" width="0.60" height="1.10" fill="#858585" />
<rect x="374.50" y="33.30" width="0.60" height="1.10" fill="#858585" />
<text x="360.10" y="32.60" font-size="3.9" fill="#c8c8c8" >500</text>
<rect x="376.30" y="29.30" width="0.50" height="5.10" fill="#8a8a8a" />
<rect x="377.99" y="33.30" width="0.60" height="1.10" fill="#858585" />
<rect x="379.74" y="33.30" width="0.60" height="1.10" fill="#858585" />
<rect x="381.48" y="33.30" width="0.60" height="1.10" fill="#858585" />
<rect x="383.23" y="33.30" width="0.60" height="1.10" fill="#858585" />
<rect x="384.97" y="32.50" width="0.60" height="1.90" fill="#8e8e8e" />
<rect x="386.72" y="33.30" width="0.60" height="1.10" fill="#858585" />
<rect x="388.46" y="33.30" width="0.60" height="1.10" fill="#858585" />
<rect x="390.21" y="33.30" width="0.60" height="1.10" fill="#858585" />
<rect x="391.95" y="33.30" width="0.60" height="1.10" fill="#858585" />
<text x="377.55" y="32.60" font-size="3.9" fill="#c8c8c8" >550</text>
<rect x="393.75" y="29.30" width="0.50" height="5.10" fill="#8a8a8a" />
<rect x="395.44" y="33.30" width="0.60" height="1.10" fill="#858585" />
<rect x="397.19" y="33.30" width="0.60" height="1.10" fill="#858585" />
<rect x="398.94" y="33.30" width="0.60" height="1.10" fill="#858585" />
<rect x="400.68" y="33.30" width="0.60" height="1.10" fill="#858585" />
<rect x="402.43" y="32.50" width="0.60" height="1.90" fill="#8e8e8e" />
<rect x="404.17" y="33.30" width="0.60" height="1.10" fill="#858585" />
<rect x="405.91" y="33.30" width="0.60" height="1.10" fill="#858585" />
<rect x="407.66" y="33.30" width="0.60" height="1.10" fill="#858585" />
<rect x="409.40" y="33.30" width="0.60" height="1.10" fill="#858585" />
<text x="395.00" y="32.60" font-size="3.9" fill="#c8c8c8" >600</text>
<rect x="411.20" y="29.30" width="0.50" height="5.10" fill="#8a8a8a" />
<rect x="412.89" y="33.30" width="0.60" height="1.10" fill="#858585" />
<rect x="414.64" y="33.30" width="0.60" height="1.10" fill="#858585" />
<rect x="416.38" y="33.30" width="0.60" height="1.10" fill="#858585" />
<rect x="418.13" y="33.30" width="0.60" height="1.10" fill="#858585" />
<rect x="419.88" y="32.50" width="0.60" height="1.90" fill="#8e8e8e" />
<rect x="421.62" y="33.30" width="0.60" height="1.10" fill="#858585" />
<rect x="423.36" y="33.30" width="0.60" height="1.10" fill="#858585" />
<rect x="425.11" y="33.30" width="0.60" height="1.10" fill="#858585" />
<rect x="426.85" y="33.30" width="0.60" height="1.10" fill="#858585" />
<text x="412.45" y="32.60" font-size="3.9" fill="#c8c8c8" >650</text>
<rect x="428.65" y="29.30" width="0.50" height="5.10" fill="#8a8a8a" />
<rect x="430.34" y="33.30" width="0.60" height="1.10" fill="#858585" />
<rect x="432.09" y="33.30" width="0.60" height="1.10" fill="#858585" />
<rect x="433.83" y="33.30" width="0.60" height="1.10" fill="#858585" />
<rect x="435.58" y="33.30" width="0.60" height="1.10" fill="#858585" />
<rect x="437.32" y="32.50" width="0.60" height="1.90" fill="#8e8e8e" />
<rect x="439.07" y="33.30" width="0.60" height="1.10" fill="#858585" />
<rect x="440.81" y="33.30" width="0.60" height="1.10" fill="#858585" />
<rect x="442.56" y="33.30" width="0.60" height="1.10" fill="#858585" />
<rect x="444.30" y="33.30" width="0.60" height="1.10" fill="#858585" />
<text x="429.90" y="32.60" font-size="3.9" fill="#c8c8c8" >700</text>
<rect x="446.10" y="29.30" width="0.50" height="5.10" fill="#8a8a8a" />
<rect x="447.80" y="33.30" width="0.60" height="1.10" fill="#858585" />
<rect x="449.54" y="33.30" width="0.60" height="1.10" fill="#858585" />
<rect x="451.29" y="33.30" width="0.60" height="1.10" fill="#858585" />
<rect x="453.03" y="33.30" width="0.60" height="1.10" fill="#858585" />
<rect x="454.78" y="32.50" width="0.60" height="1.90" fill="#8e8e8e" />
<rect x="456.52" y="33.30" width="0.60" height="1.10" fill="#858585" />
<rect x="458.26" y="33.30" width="0.60" height="1.10" fill="#858585" />
<rect x="460.01" y="33.30" width="0.60" height="1.10" fill="#858585" />
<rect x="461.75" y="33.30" width="0.60" height="1.10" fill="#858585" />
<text x="447.35" y="32.60" font-size="3.9" fill="#c8c8c8" >750</text>
<rect x="463.55" y="29.30" width="0.50" height="5.10" fill="#8a8a8a" />
<rect x="465.24" y="33.30" width="0.60" height="1.10" fill="#858585" />
<rect x="466.99" y="33.30" width="0.60" height="1.10" fill="#858585" />
<rect x="468.73" y="33.30" width="0.60" height="1.10" fill="#858585" />
<rect x="470.48" y="33.30" width="0.60" height="1.10" fill="#858585" />
<rect x="472.22" y="32.50" width="0.60" height="1.90" fill="#8e8e8e" />
<rect x="473.97" y="33.30" width="0.60" height="1.10" fill="#858585" />
<rect x="475.71" y="33.30" width="0.60" height="1.10" fill="#858585" />
<rect x="477.46" y="33.30" width="0.60" height="1.10" fill="#858585" />
<rect x="479.20" y="33.30" width="0.60" height="1.10" fill="#858585" />
<text x="464.80" y="32.60" font-size="3.9" fill="#c8c8c8" >800</text>
<rect x="481.00" y="29.30" width="0.50" height="5.10" fill="#8a8a8a" />
<rect x="482.69" y="33.30" width="0.60" height="1.10" fill="#858585" />
<rect x="484.44" y="33.30" width="0.60" height="1.10" fill="#858585" />
<rect x="486.19" y="33.30" width="0.60" height="1.10" fill="#858585" />
<rect x="487.93" y="33.30" width="0.60" height="1.10" fill="#858585" />
<rect x="489.68" y="32.50" width="0.60" height="1.90" fill="#8e8e8e" />
<rect x="491.42" y="33.30" width="0.60" height="1.10" fill="#858585" />
<rect x="493.16" y="33.30" width="0.60" height="1.10" fill="#858585" />
<rect x="494.91" y="33.30" width="0.60" height="1.10" fill="#858585" />
<rect x="496.65" y="33.30" width="0.60" height="1.10" fill="#858585" />
<text x="482.25" y="32.60" font-size="3.9" fill="#c8c8c8" >850</text>
<rect x="498.45" y="29.30" width="0.50" height="5.10" fill="#8a8a8a" />
<rect x="500.14" y="33.30" width="0.60" height="1.10" fill="#858585" />
<rect x="501.89" y="33.30" width="0.60" height="1.10" fill="#858585" />
<rect x="503.63" y="33.30" width="0.60" height="1.10" fill="#858585" />
<rect x="505.38" y="33.30" width="0.60" height="1.10" fill="#858585" />
<rect x="507.12" y="32.50" width="0.60" height="1.90" fill="#8e8e8e" />
<rect x="508.87" y="33.30" width="0.60" height="1.10" fill="#858585" />
<rect x="510.61" y="33.30" width="0.60" height="1.10" fill="#858585" />
<rect x="512.36" y="33.30" width="0.60" height="1.10" fill="#858585" />
<rect x="514.11" y="33.30" width="0.60" height="1.10" fill="#858585" />
<text x="499.70" y="32.60" font-size="3.9" fill="#c8c8c8" >900</text>
<rect x="515.90" y="29.30" width="0.50" height="5.10" fill="#8a8a8a" />
<rect x="517.60" y="33.30" width="0.60" height="1.10" fill="#858585" />
<rect x="519.34" y="33.30" width="0.60" height="1.10" fill="#858585" />
<rect x="521.09" y="33.30" width="0.60" height="1.10" fill="#858585" />
<rect x="522.83" y="33.30" width="0.60" height="1.10" fill="#858585" />
<rect x="524.58" y="32.50" width="0.60" height="1.90" fill="#8e8e8e" />
<rect x="526.32" y="33.30" width="0.60" height="1.10" fill="#858585" />
<rect x="528.07" y="33.30" width="0.60" height="1.10" fill="#858585" />
<rect x="529.81" y="33.30" width="0.60" height="1.10" fill="#858585" />
<rect x="531.56" y="33.30" width="0.60" height="1.10" fill="#858585" />
<text x="517.15" y="32.60" font-size="3.9" fill="#c8c8c8" >950</text>
<rect x="533.35" y="29.30" width="0.50" height="5.10" fill="#8a8a8a" />
<rect x="535.05" y="33.30" width="0.60" height="1.10" fill="#858585" />
<rect x="536.79" y="33.30" width="0.60" height="1.10" fill="#858585" />
<rect x="538.54" y="33.30" width="0.60" height="1.10" fill="#858585" />
<rect x="540.28" y="33.30" width="0.60" height="1.10" fill="#858585" />
<rect x="542.03" y="32.50" width="0.60" height="1.90" fill="#8e8e8e" />
<rect x="543.77" y="33.30" width="0.60" height="1.10" fill="#858585" />
<rect x="545.52" y="33.30" width="0.60" height="1.10" fill="#858585" />
<rect x="547.26" y="33.30" width="0.60" height="1.10" fill="#858585" />
<rect x="549.01" y="33.30" width="0.60" height="1.10" fill="#858585" />
<text x="534.60" y="32.60" font-size="3.9" fill="#c8c8c8" >1000</text>
<rect x="550.80" y="29.30" width="0.50" height="5.10" fill="#8a8a8a" />
<rect x="552.50" y="33.30" width="0.60" height="1.10" fill="#858585" />
<rect x="554.24" y="33.30" width="0.60" height="1.10" fill="#858585" />
<rect x="555.99" y="33.30" width="0.60" height="1.10" fill="#858585" />
<rect x="557.73" y="33.30" width="0.60" height="1.10" fill="#858585" />
<rect x="559.48" y="32.50" width="0.60" height="1.90" fill="#8e8e8e" />
<rect x="561.22" y="33.30" width="0.60" height="1.10" fill="#858585" />
<rect x="562.97" y="33.30" width="0.60" height="1.10" fill="#858585" />
<rect x="564.71" y="33.30" width="0.60" height="1.10" fill="#858585" />
<rect x="566.46" y="33.30" width="0.60" height="1.10" fill="#858585" />
<text x="552.05" y="32.60" font-size="3.9" fill="#c8c8c8" >1050</text>
<rect x="568.25" y="29.30" width="0.50" height="5.10" fill="#8a8a8a" />
<rect x="569.95" y="33.30" width="0.60" height="1.10" fill="#858585" />
<rect x="571.69" y="33.30" width="0.60" height="1.10" fill="#858585" />
<rect x="573.44" y="33.30" width="0.60" height="1.10" fill="#858585" />
<rect x="575.18" y="33.30" width="0.60" height="1.10" fill="#858585" />
<rect x="576.93" y="32.50" width="0.60" height="1.90" fill="#8e8e8e" />
<rect x="578.67" y="33.30" width="0.60" height="1.10" fill="#858585" />
<rect x="580.42" y="33.30" width="0.60" height="1.10" fill="#858585" />
<rect x="582.16" y="33.30" width="0.60" height="1.10" fill="#858585" />
<rect x="583.91" y="33.30" width="0.60" height="1.10" fill="#858585" />
<text x="569.50" y="32.60" font-size="3.9" fill="#c8c8c8" >1100</text>
<rect x="585.70" y="29.30" width="0.50" height="5.10" fill="#8a8a8a" />
<rect x="587.39" y="33.30" width="0.60" height="1.10" fill="#858585" />
<rect x="589.14" y="33.30" width="0.60" height="1.10" fill="#858585" />
<rect x="590.88" y="33.30" width="0.60" height="1.10" fill="#858585" />
<rect x="592.63" y="33.30" width="0.60" height="1.10" fill="#858585" />
<rect x="594.38" y="32.50" width="0.60" height="1.90" fill="#8e8e8e" />
<rect x="596.12" y="33.30" width="0.60" height="1.10" fill="#858585" />
<rect x="597.87" y="33.30" width="0.60" height="1.10" fill="#858585" />
<rect x="599.61" y="33.30" width="0.60" height="1.10" fill="#858585" />
<rect x="601.36" y="33.30" width="0.60" height="1.10" fill="#858585" />
<text x="586.95" y="32.60" font-size="3.9" fill="#c8c8c8" >1150</text>
<rect x="603.15" y="29.30" width="0.50" height="5.10" fill="#8a8a8a" />
<rect x="604.85" y="33.30" width="0.60" height="1.10" fill="#858585" />
<rect x="606.59" y="33.30" width="0.60" height="1.10" fill="#858585" />
<rect x="608.34" y="33.30" width="0.60" height="1.10" fill="#858585" />
<rect x="610.08" y="33.30" width="0.60" height="1.10" fill="#858585" />
<rect x="611.83" y="32.50" width="0.60" height="1.90" fill="#8e8e8e" />
<rect x="613.57" y="33.30" width="0.60" height="1.10" fill="#858585" />
<rect x="615.32" y="33.30" width="0.60" height="1.10" fill="#858585" />
<rect x="617.06" y="33.30" width="0.60" height="1.10" fill="#858585" />
<rect x="618.81" y="33.30" width="0.60" height="1.10" fill="#858585" />
<text x="604.40" y="32.60" font-size="3.9" fill="#c8c8c8" >1200</text>
<rect x="620.60" y="29.30" width="0.50" height="5.10" fill="#8a8a8a" />
<rect x="622.30" y="33.30" width="0.60" height="1.10" fill="#858585" />
<rect x="624.04" y="33.30" width="0.60" height="1.10" fill="#858585" />
<rect x="625.79" y="33.30" width="0.60" height="1.10" fill="#858585" />
<rect x="627.53" y="33.30" width="0.60" height="1.10" fill="#858585" />
<rect x="629.28" y="32.50" width="0.60" height="1.90" fill="#8e8e8e" />
<rect x="631.02" y="33.30" width="0.60" height="1.10" fill="#858585" />
<rect x="632.77" y="33.30" width="0.60" height="1.10" fill="#858585" />
<rect x="634.51" y="33.30" width="0.60" height="1.10" fill="#858585" />
<rect x="636.26" y="33.30" width="0.60" height="1.10" fill="#858585" />
<text x="621.85" y="32.60" font-size="3.9" fill="#c8c8c8" >1250</text>
<rect x="638.05" y="29.30" width="0.50" height="5.10" fill="#8a8a8a" />
<rect x="639.75" y="33.30" width="0.60" height="1.10" fill="#858585" />
<rect x="641.49" y="33.30" width="0.60" height="1.10" fill="#858585" />
<rect x="643.24" y="33.30" width="0.60" height="1.10" fill="#858585" />
<rect x="644.98" y="33.30" width="0.60" height="1.10" fill="#858585" />
<rect x="646.73" y="32.50" width="0.60" height="1.90" fill="#8e8e8e" />
<rect x="648.47" y="33.30" width="0.60" height="1.10" fill="#858585" />
<rect x="650.22" y="33.30" width="0.60" height="1.10" fill="#858585" />
<rect x="651.96" y="33.30" width="0.60" height="1.10" fill="#858585" />
<rect x="653.71" y="33.30" width="0.60" height="1.10" fill="#858585" />
<text x="639.30" y="32.60" font-size="3.9" fill="#c8c8c8" >1300</text>
<rect x="655.50" y="29.30" width="0.50" height="5.10" fill="#8a8a8a" />
<rect x="657.20" y="33.30" width="0.60" height="1.10" fill="#858585" />
<rect x="658.94" y="33.30" width="0.60" height="1.10" fill="#858585" />
<rect x="660.69" y="33.30" width="0.60" height="1.10" fill="#858585" />
<rect x="662.43" y="33.30" width="0.60" height="1.10" fill="#858585" />
<rect x="664.18" y="32.50" width="0.60" height="1.90" fill="#8e8e8e" />
<rect x="665.92" y="33.30" width="0.60" height="1.10" fill="#858585" />
<rect x="667.67" y="33.30" width="0.60" height="1.10" fill="#858585" />
<rect x="669.41" y="33.30" width="0.60" height="1.10" fill="#858585" />
<rect x="671.16" y="33.30" width="0.60" height="1.10" fill="#858585" />
<text x="656.75" y="32.60" font-size="3.9" fill="#c8c8c8" >1350</text>
<rect x="672.95" y="29.30" width="0.50" height="5.10" fill="#8a8a8a" />
<rect x="674.64" y="33.30" width="0.60" height="1.10" fill="#858585" />
<rect x="676.39" y="33.30" width="0.60" height="1.10" fill="#858585" />
<rect x="678.13" y="33.30" width="0.60" height="1.10" fill="#858585" />
<rect x="679.88" y="33.30" width="0.60" height="1.10" fill="#858585" />
<rect x="681.62" y="32.50" width="0.60" height="1.90" fill="#8e8e8e" />
<rect x="683.37" y="33.30" width="0.60" height="1.10" fill="#858585" />
<rect x="685.12" y="33.30" width="0.60" height="1.10" fill="#858585" />
<rect x="686.86" y="33.30" width="0.60" height="1.10" fill="#858585" />
<rect x="688.61" y="33.30" width="0.60" height="1.10" fill="#858585" />
<text x="674.20" y="32.60" font-size="3.9" fill="#c8c8c8" >1400</text>
<rect x="690.40" y="29.30" width="0.50" height="5.10" fill="#8a8a8a" />
<rect x="692.10" y="33.30" width="0.60" height="1.10" fill="#858585" />
<rect x="693.84" y="33.30" width="0.60" height="1.10" fill="#858585" />
<rect x="695.59" y="33.30" width="0.60" height="1.10" fill="#858585" />
<text x="691.65" y="32.60" font-size="3.9" fill="#c8c8c8" >1450</text>
</g><g clip-path="url(#rl)">
<rect x="30.10" y="34.48" width="1.90" height="0.60" fill="#8e8e8e" />
<rect x="30.90" y="36.22" width="1.10" height="0.60" fill="#858585" />
<rect x="30.90" y="37.97" width="1.10" height="0.60" fill="#858585" />
<rect x="30.90" y="39.71" width="1.10" height="0.60" fill="#858585" />
<rect x="30.90" y="41.46" width="1.10" height="0.60" fill="#858585" />
<rect x="26.20" y="43.25" width="5.80" height="0.50" fill="#8a8a8a" />
<rect x="30.90" y="44.95" width="1.10" height="0.60" fill="#858585" />
<rect x="30.90" y="46.69" width="1.10" height="0.60" fill="#858585" />
<rect x="30.90" y="48.44" width="1.10" height="0.60" fill="#858585" />
<rect x="30.90" y="50.18" width="1.10" height="0.60" fill="#858585" />
<rect x="30.10" y="51.93" width="1.90" height="0.60" fill="#8e8e8e" />
<rect x="30.90" y="53.67" width="1.10" height="0.60" fill="#858585" />
<rect x="30.90" y="55.42" width="1.10" height="0.60" fill="#858585" />
<rect x="30.90" y="57.16" width="1.10" height="0.60" fill="#858585" />
<rect x="30.90" y="58.91" width="1.10" height="0.60" fill="#858585" />
<text x="26.90" y="47.40" font-size="3.7" fill="#bcbcbc" >1</text>
<text x="26.90" y="50.80" font-size="3.7" fill="#bcbcbc" >0</text>
<text x="26.90" y="54.20" font-size="3.7" fill="#bcbcbc" >0</text>
<rect x="26.20" y="60.70" width="5.80" height="0.50" fill="#8a8a8a" />
<rect x="30.90" y="62.40" width="1.10" height="0.60" fill="#858585" />
<rect x="30.90" y="64.14" width="1.10" height="0.60" fill="#858585" />
<rect x="30.90" y="65.89" width="1.10" height="0.60" fill="#858585" />
<rect x="30.90" y="67.63" width="1.10" height="0.60" fill="#858585" />
<rect x="30.10" y="69.38" width="1.90" height="0.60" fill="#8e8e8e" />
<rect x="30.90" y="71.12" width="1.10" height="0.60" fill="#858585" />
<rect x="30.90" y="72.87" width="1.10" height="0.60" fill="#858585" />
<rect x="30.90" y="74.61" width="1.10" height="0.60" fill="#858585" />
<rect x="30.90" y="76.36" width="1.10" height="0.60" fill="#858585" />
<text x="26.90" y="64.85" font-size="3.7" fill="#bcbcbc" >5</text>
<text x="26.90" y="68.25" font-size="3.7" fill="#bcbcbc" >0</text>
<rect x="26.20" y="78.15" width="5.80" height="0.50" fill="#8a8a8a" />
<rect x="30.90" y="79.85" width="1.10" height="0.60" fill="#858585" />
<rect x="30.90" y="81.59" width="1.10" height="0.60" fill="#858585" />
<rect x="30.90" y="83.34" width="1.10" height="0.60" fill="#858585" />
<rect x="30.90" y="85.08" width="1.10" height="0.60" fill="#858585" />
<rect x="30.10" y="86.83" width="1.90" height="0.60" fill="#8e8e8e" />
<rect x="30.90" y="88.57" width="1.10" height="0.60" fill="#858585" />
<rect x="30.90" y="90.32" width="1.10" height="0.60" fill="#858585" />
<rect x="30.90" y="92.06" width="1.10" height="0.60" fill="#858585" />
<rect x="30.90" y="93.81" width="1.10" height="0.60" fill="#858585" />
<text x="26.90" y="82.30" font-size="3.7" fill="#bcbcbc" >0</text>
<rect x="26.20" y="95.60" width="5.80" height="0.50" fill="#8a8a8a" />
<rect x="30.90" y="97.30" width="1.10" height="0.60" fill="#858585" />
<rect x="30.90" y="99.04" width="1.10" height="0.60" fill="#858585" />
<rect x="30.90" y="100.79" width="1.10" height="0.60" fill="#858585" />
<rect x="30.90" y="102.53" width="1.10" height="0.60" fill="#858585" />
<rect x="30.10" y="104.28" width="1.90" height="0.60" fill="#8e8e8e" />
<rect x="30.90" y="106.02" width="1.10" height="0.60" fill="#858585" />
<rect x="30.90" y="107.77" width="1.10" height="0.60" fill="#858585" />
<rect x="30.90" y="109.51" width="1.10" height="0.60" fill="#858585" />
<rect x="30.90" y="111.26" width="1.10" height="0.60" fill="#858585" />
<text x="26.90" y="99.75" font-size="3.7" fill="#bcbcbc" >5</text>
<text x="26.90" y="103.15" font-size="3.7" fill="#bcbcbc" >0</text>
<rect x="26.20" y="113.05" width="5.80" height="0.50" fill="#8a8a8a" />
<rect x="30.90" y="114.75" width="1.10" height="0.60" fill="#858585" />
<rect x="30.90" y="116.49" width="1.10" height="0.60" fill="#858585" />
<rect x="30.90" y="118.24" width="1.10" height="0.60" fill="#858585" />
<rect x="30.90" y="119.98" width="1.10" height="0.60" fill="#858585" />
<rect x="30.10" y="121.73" width="1.90" height="0.60" fill="#8e8e8e" />
<rect x="30.90" y="123.47" width="1.10" height="0.60" fill="#858585" />
<rect x="30.90" y="125.22" width="1.10" height="0.60" fill="#858585" />
<rect x="30.90" y="126.96" width="1.10" height="0.60" fill="#858585" />
<rect x="30.90" y="128.70" width="1.10" height="0.60" fill="#858585" />
<text x="26.90" y="117.20" font-size="3.7" fill="#bcbcbc" >1</text>
<text x="26.90" y="120.60" font-size="3.7" fill="#bcbcbc" >0</text>
<text x="26.90" y="124.00" font-size="3.7" fill="#bcbcbc" >0</text>
<rect x="26.20" y="130.50" width="5.80" height="0.50" fill="#8a8a8a" />
<rect x="30.90" y="132.19" width="1.10" height="0.60" fill="#858585" />
<rect x="30.90" y="133.94" width="1.10" height="0.60" fill="#858585" />
<rect x="30.90" y="135.69" width="1.10" height="0.60" fill="#858585" />
<rect x="30.90" y="137.43" width="1.10" height="0.60" fill="#858585" />
<rect x="30.10" y="139.17" width="1.90" height="0.60" fill="#8e8e8e" />
<rect x="30.90" y="140.92" width="1.10" height="0.60" fill="#858585" />
<rect x="30.90" y="142.66" width="1.10" height="0.60" fill="#858585" />
<rect x="30.90" y="144.41" width="1.10" height="0.60" fill="#858585" />
<rect x="30.90" y="146.15" width="1.10" height="0.60" fill="#858585" />
<text x="26.90" y="134.65" font-size="3.7" fill="#bcbcbc" >1</text>
<text x="26.90" y="138.05" font-size="3.7" fill="#bcbcbc" >5</text>
<text x="26.90" y="141.45" font-size="3.7" fill="#bcbcbc" >0</text>
<rect x="26.20" y="147.95" width="5.80" height="0.50" fill="#8a8a8a" />
<rect x="30.90" y="149.64" width="1.10" height="0.60" fill="#858585" />
<rect x="30.90" y="151.39" width="1.10" height="0.60" fill="#858585" />
<rect x="30.90" y="153.13" width="1.10" height="0.60" fill="#858585" />
<rect x="30.90" y="154.88" width="1.10" height="0.60" fill="#858585" />
<rect x="30.10" y="156.62" width="1.90" height="0.60" fill="#8e8e8e" />
<rect x="30.90" y="158.37" width="1.10" height="0.60" fill="#858585" />
<rect x="30.90" y="160.11" width="1.10" height="0.60" fill="#858585" />
<rect x="30.90" y="161.86" width="1.10" height="0.60" fill="#858585" />
<rect x="30.90" y="163.60" width="1.10" height="0.60" fill="#858585" />
<text x="26.90" y="152.10" font-size="3.7" fill="#bcbcbc" >2</text>
<text x="26.90" y="155.50" font-size="3.7" fill="#bcbcbc" >0</text>
<text x="26.90" y="158.90" font-size="3.7" fill="#bcbcbc" >0</text>
<rect x="26.20" y="165.40" width="5.80" height="0.50" fill="#8a8a8a" />
<rect x="30.90" y="167.09" width="1.10" height="0.60" fill="#858585" />
<rect x="30.90" y="168.84" width="1.10" height="0.60" fill="#858585" />
<rect x="30.90" y="170.58" width="1.10" height="0.60" fill="#858585" />
<rect x="30.90" y="172.33" width="1.10" height="0.60" fill="#858585" />
<rect x="30.10" y="174.07" width="1.90" height="0.60" fill="#8e8e8e" />
<rect x="30.90" y="175.82" width="1.10" height="0.60" fill="#858585" />
<rect x="30.90" y="177.56" width="1.10" height="0.60" fill="#858585" />
<rect x="30.90" y="179.31" width="1.10" height="0.60" fill="#858585" />
<rect x="30.90" y="181.06" width="1.10" height="0.60" fill="#858585" />
<text x="26.90" y="169.55" font-size="3.7" fill="#bcbcbc" >2</text>
<text x="26.90" y="172.95" font-size="3.7" fill="#bcbcbc" >5</text>
<text x="26.90" y="176.35" font-size="3.7" fill="#bcbcbc" >0</text>
<rect x="26.20" y="182.85" width="5.80" height="0.50" fill="#8a8a8a" />
<rect x="30.90" y="184.54" width="1.10" height="0.60" fill="#858585" />
<rect x="30.90" y="186.29" width="1.10" height="0.60" fill="#858585" />
<rect x="30.90" y="188.03" width="1.10" height="0.60" fill="#858585" />
<rect x="30.90" y="189.78" width="1.10" height="0.60" fill="#858585" />
<rect x="30.10" y="191.52" width="1.90" height="0.60" fill="#8e8e8e" />
<rect x="30.90" y="193.27" width="1.10" height="0.60" fill="#858585" />
<rect x="30.90" y="195.01" width="1.10" height="0.60" fill="#858585" />
<rect x="30.90" y="196.76" width="1.10" height="0.60" fill="#858585" />
<rect x="30.90" y="198.50" width="1.10" height="0.60" fill="#858585" />
<text x="26.90" y="187.00" font-size="3.7" fill="#bcbcbc" >3</text>
<text x="26.90" y="190.40" font-size="3.7" fill="#bcbcbc" >0</text>
<text x="26.90" y="193.80" font-size="3.7" fill="#bcbcbc" >0</text>
<rect x="26.20" y="200.30" width="5.80" height="0.50" fill="#8a8a8a" />
<rect x="30.90" y="202.00" width="1.10" height="0.60" fill="#858585" />
<rect x="30.90" y="203.74" width="1.10" height="0.60" fill="#858585" />
<rect x="30.90" y="205.49" width="1.10" height="0.60" fill="#858585" />
<rect x="30.90" y="207.23" width="1.10" height="0.60" fill="#858585" />
<rect x="30.10" y="208.97" width="1.90" height="0.60" fill="#8e8e8e" />
<rect x="30.90" y="210.72" width="1.10" height="0.60" fill="#858585" />
<rect x="30.90" y="212.47" width="1.10" height="0.60" fill="#858585" />
<rect x="30.90" y="214.21" width="1.10" height="0.60" fill="#858585" />
<rect x="30.90" y="215.95" width="1.10" height="0.60" fill="#858585" />
<text x="26.90" y="204.45" font-size="3.7" fill="#bcbcbc" >3</text>
<text x="26.90" y="207.85" font-size="3.7" fill="#bcbcbc" >5</text>
<text x="26.90" y="211.25" font-size="3.7" fill="#bcbcbc" >0</text>
<rect x="26.20" y="217.75" width="5.80" height="0.50" fill="#8a8a8a" />
<rect x="30.90" y="219.44" width="1.10" height="0.60" fill="#858585" />
<rect x="30.90" y="221.19" width="1.10" height="0.60" fill="#858585" />
<rect x="30.90" y="222.94" width="1.10" height="0.60" fill="#858585" />
<rect x="30.90" y="224.68" width="1.10" height="0.60" fill="#858585" />
<rect x="30.10" y="226.42" width="1.90" height="0.60" fill="#8e8e8e" />
<rect x="30.90" y="228.17" width="1.10" height="0.60" fill="#858585" />
<rect x="30.90" y="229.91" width="1.10" height="0.60" fill="#858585" />
<rect x="30.90" y="231.66" width="1.10" height="0.60" fill="#858585" />
<rect x="30.90" y="233.40" width="1.10" height="0.60" fill="#858585" />
<text x="26.90" y="221.90" font-size="3.7" fill="#bcbcbc" >4</text>
<text x="26.90" y="225.30" font-size="3.7" fill="#bcbcbc" >0</text>
<text x="26.90" y="228.70" font-size="3.7" fill="#bcbcbc" >0</text>
<rect x="26.20" y="235.20" width="5.80" height="0.50" fill="#8a8a8a" />
<rect x="30.90" y="236.89" width="1.10" height="0.60" fill="#858585" />
<rect x="30.90" y="238.64" width="1.10" height="0.60" fill="#858585" />
<rect x="30.90" y="240.38" width="1.10" height="0.60" fill="#858585" />
<rect x="30.90" y="242.13" width="1.10" height="0.60" fill="#858585" />
<rect x="30.10" y="243.87" width="1.90" height="0.60" fill="#8e8e8e" />
<rect x="30.90" y="245.62" width="1.10" height="0.60" fill="#858585" />
<rect x="30.90" y="247.36" width="1.10" height="0.60" fill="#858585" />
<rect x="30.90" y="249.11" width="1.10" height="0.60" fill="#858585" />
<rect x="30.90" y="250.85" width="1.10" height="0.60" fill="#858585" />
<text x="26.90" y="239.35" font-size="3.7" fill="#bcbcbc" >4</text>
<text x="26.90" y="242.75" font-size="3.7" fill="#bcbcbc" >5</text>
<text x="26.90" y="246.15" font-size="3.7" fill="#bcbcbc" >0</text>
<rect x="26.20" y="252.65" width="5.80" height="0.50" fill="#8a8a8a" />
<rect x="30.90" y="254.34" width="1.10" height="0.60" fill="#858585" />
<rect x="30.90" y="256.09" width="1.10" height="0.60" fill="#858585" />
<rect x="30.90" y="257.83" width="1.10" height="0.60" fill="#858585" />
<rect x="30.90" y="259.58" width="1.10" height="0.60" fill="#858585" />
<rect x="30.10" y="261.32" width="1.90" height="0.60" fill="#8e8e8e" />
<rect x="30.90" y="263.07" width="1.10" height="0.60" fill="#858585" />
<rect x="30.90" y="264.81" width="1.10" height="0.60" fill="#858585" />
<rect x="30.90" y="266.56" width="1.10" height="0.60" fill="#858585" />
<rect x="30.90" y="268.31" width="1.10" height="0.60" fill="#858585" />
<text x="26.90" y="256.80" font-size="3.7" fill="#bcbcbc" >5</text>
<text x="26.90" y="260.20" font-size="3.7" fill="#bcbcbc" >0</text>
<text x="26.90" y="263.60" font-size="3.7" fill="#bcbcbc" >0</text>
<rect x="26.20" y="270.10" width="5.80" height="0.50" fill="#8a8a8a" />
<rect x="30.90" y="271.80" width="1.10" height="0.60" fill="#858585" />
<rect x="30.90" y="273.54" width="1.10" height="0.60" fill="#858585" />
<rect x="30.90" y="275.29" width="1.10" height="0.60" fill="#858585" />
<rect x="30.90" y="277.03" width="1.10" height="0.60" fill="#858585" />
<rect x="30.10" y="278.78" width="1.90" height="0.60" fill="#8e8e8e" />
<rect x="30.90" y="280.52" width="1.10" height="0.60" fill="#858585" />
<rect x="30.90" y="282.26" width="1.10" height="0.60" fill="#858585" />
<rect x="30.90" y="284.01" width="1.10" height="0.60" fill="#858585" />
<rect x="30.90" y="285.75" width="1.10" height="0.60" fill="#858585" />
<text x="26.90" y="274.25" font-size="3.7" fill="#bcbcbc" >5</text>
<text x="26.90" y="277.65" font-size="3.7" fill="#bcbcbc" >5</text>
<text x="26.90" y="281.05" font-size="3.7" fill="#bcbcbc" >0</text>
<rect x="26.20" y="287.55" width="5.80" height="0.50" fill="#8a8a8a" />
<rect x="30.90" y="289.24" width="1.10" height="0.60" fill="#858585" />
<rect x="30.90" y="290.99" width="1.10" height="0.60" fill="#858585" />
<rect x="30.90" y="292.73" width="1.10" height="0.60" fill="#858585" />
<rect x="30.90" y="294.48" width="1.10" height="0.60" fill="#858585" />
<rect x="30.10" y="296.22" width="1.90" height="0.60" fill="#8e8e8e" />
<rect x="30.90" y="297.97" width="1.10" height="0.60" fill="#858585" />
<rect x="30.90" y="299.71" width="1.10" height="0.60" fill="#858585" />
<rect x="30.90" y="301.46" width="1.10" height="0.60" fill="#858585" />
<rect x="30.90" y="303.20" width="1.10" height="0.60" fill="#858585" />
<text x="26.90" y="291.70" font-size="3.7" fill="#bcbcbc" >6</text>
<text x="26.90" y="295.10" font-size="3.7" fill="#bcbcbc" >0</text>
<text x="26.90" y="298.50" font-size="3.7" fill="#bcbcbc" >0</text>
<rect x="26.20" y="305.00" width="5.80" height="0.50" fill="#8a8a8a" />
<rect x="30.90" y="306.69" width="1.10" height="0.60" fill="#858585" />
<rect x="30.90" y="308.44" width="1.10" height="0.60" fill="#858585" />
<rect x="30.90" y="310.19" width="1.10" height="0.60" fill="#858585" />
<rect x="30.90" y="311.93" width="1.10" height="0.60" fill="#858585" />
<rect x="30.10" y="313.68" width="1.90" height="0.60" fill="#8e8e8e" />
<rect x="30.90" y="315.42" width="1.10" height="0.60" fill="#858585" />
<rect x="30.90" y="317.16" width="1.10" height="0.60" fill="#858585" />
<rect x="30.90" y="318.91" width="1.10" height="0.60" fill="#858585" />
<rect x="30.90" y="320.65" width="1.10" height="0.60" fill="#858585" />
<text x="26.90" y="309.15" font-size="3.7" fill="#bcbcbc" >6</text>
<text x="26.90" y="312.55" font-size="3.7" fill="#bcbcbc" >5</text>
<text x="26.90" y="315.95" font-size="3.7" fill="#bcbcbc" >0</text>
<rect x="26.20" y="322.45" width="5.80" height="0.50" fill="#8a8a8a" />
<rect x="30.90" y="324.14" width="1.10" height="0.60" fill="#858585" />
<rect x="30.90" y="325.89" width="1.10" height="0.60" fill="#858585" />
<rect x="30.90" y="327.63" width="1.10" height="0.60" fill="#858585" />
<rect x="30.90" y="329.38" width="1.10" height="0.60" fill="#858585" />
<rect x="30.10" y="331.12" width="1.90" height="0.60" fill="#8e8e8e" />
<rect x="30.90" y="332.87" width="1.10" height="0.60" fill="#858585" />
<rect x="30.90" y="334.61" width="1.10" height="0.60" fill="#858585" />
<rect x="30.90" y="336.36" width="1.10" height="0.60" fill="#858585" />
<rect x="30.90" y="338.10" width="1.10" height="0.60" fill="#858585" />
<text x="26.90" y="326.60" font-size="3.7" fill="#bcbcbc" >7</text>
<text x="26.90" y="330.00" font-size="3.7" fill="#bcbcbc" >0</text>
<text x="26.90" y="333.40" font-size="3.7" fill="#bcbcbc" >0</text>
<rect x="26.20" y="339.90" width="5.80" height="0.50" fill="#8a8a8a" />
<rect x="30.90" y="341.59" width="1.10" height="0.60" fill="#858585" />
<rect x="30.90" y="343.34" width="1.10" height="0.60" fill="#858585" />
<rect x="30.90" y="345.08" width="1.10" height="0.60" fill="#858585" />
<rect x="30.90" y="346.83" width="1.10" height="0.60" fill="#858585" />
<rect x="30.10" y="348.57" width="1.90" height="0.60" fill="#8e8e8e" />
<rect x="30.90" y="350.32" width="1.10" height="0.60" fill="#858585" />
<rect x="30.90" y="352.06" width="1.10" height="0.60" fill="#858585" />
<rect x="30.90" y="353.81" width="1.10" height="0.60" fill="#858585" />
<rect x="30.90" y="355.55" width="1.10" height="0.60" fill="#858585" />
<text x="26.90" y="344.05" font-size="3.7" fill="#bcbcbc" >7</text>
<text x="26.90" y="347.45" font-size="3.7" fill="#bcbcbc" >5</text>
<text x="26.90" y="350.85" font-size="3.7" fill="#bcbcbc" >0</text>
<rect x="26.20" y="357.35" width="5.80" height="0.50" fill="#8a8a8a" />
<rect x="30.90" y="359.05" width="1.10" height="0.60" fill="#858585" />
<rect x="30.90" y="360.79" width="1.10" height="0.60" fill="#858585" />
<rect x="30.90" y="362.54" width="1.10" height="0.60" fill="#858585" />
<rect x="30.90" y="364.28" width="1.10" height="0.60" fill="#858585" />
<rect x="30.10" y="366.03" width="1.90" height="0.60" fill="#8e8e8e" />
<rect x="30.90" y="367.77" width="1.10" height="0.60" fill="#858585" />
<rect x="30.90" y="369.51" width="1.10" height="0.60" fill="#858585" />
<rect x="30.90" y="371.26" width="1.10" height="0.60" fill="#858585" />
<rect x="30.90" y="373.00" width="1.10" height="0.60" fill="#858585" />
<text x="26.90" y="361.50" font-size="3.7" fill="#bcbcbc" >8</text>
<text x="26.90" y="364.90" font-size="3.7" fill="#bcbcbc" >0</text>
<text x="26.90" y="368.30" font-size="3.7" fill="#bcbcbc" >0</text>
<rect x="26.20" y="374.80" width="5.80" height="0.50" fill="#8a8a8a" />
<rect x="30.90" y="376.49" width="1.10" height="0.60" fill="#858585" />
<rect x="30.90" y="378.24" width="1.10" height="0.60" fill="#858585" />
<rect x="30.90" y="379.98" width="1.10" height="0.60" fill="#858585" />
<rect x="30.90" y="381.73" width="1.10" height="0.60" fill="#858585" />
<rect x="30.10" y="383.47" width="1.90" height="0.60" fill="#8e8e8e" />
<rect x="30.90" y="385.22" width="1.10" height="0.60" fill="#858585" />
<rect x="30.90" y="386.96" width="1.10" height="0.60" fill="#858585" />
<rect x="30.90" y="388.71" width="1.10" height="0.60" fill="#858585" />
<rect x="30.90" y="390.45" width="1.10" height="0.60" fill="#858585" />
<text x="26.90" y="378.95" font-size="3.7" fill="#bcbcbc" >8</text>
<text x="26.90" y="382.35" font-size="3.7" fill="#bcbcbc" >5</text>
<text x="26.90" y="385.75" font-size="3.7" fill="#bcbcbc" >0</text>
<rect x="26.20" y="392.25" width="5.80" height="0.50" fill="#8a8a8a" />
<rect x="30.90" y="393.94" width="1.10" height="0.60" fill="#858585" />
<rect x="30.90" y="395.69" width="1.10" height="0.60" fill="#858585" />
<rect x="30.90" y="397.44" width="1.10" height="0.60" fill="#858585" />
<rect x="30.90" y="399.18" width="1.10" height="0.60" fill="#858585" />
<rect x="30.10" y="400.93" width="1.90" height="0.60" fill="#8e8e8e" />
<rect x="30.90" y="402.67" width="1.10" height="0.60" fill="#858585" />
<rect x="30.90" y="404.41" width="1.10" height="0.60" fill="#858585" />
<rect x="30.90" y="406.16" width="1.10" height="0.60" fill="#858585" />
<rect x="30.90" y="407.90" width="1.10" height="0.60" fill="#858585" />
<text x="26.90" y="396.40" font-size="3.7" fill="#bcbcbc" >9</text>
<text x="26.90" y="399.80" font-size="3.7" fill="#bcbcbc" >0</text>
<text x="26.90" y="403.20" font-size="3.7" fill="#bcbcbc" >0</text>
<rect x="26.20" y="409.70" width="5.80" height="0.50" fill="#8a8a8a" />
<rect x="30.90" y="411.40" width="1.10" height="0.60" fill="#858585" />
<rect x="30.90" y="413.14" width="1.10" height="0.60" fill="#858585" />
<rect x="30.90" y="414.89" width="1.10" height="0.60" fill="#858585" />
<rect x="30.90" y="416.63" width="1.10" height="0.60" fill="#858585" />
<rect x="30.10" y="418.38" width="1.90" height="0.60" fill="#8e8e8e" />
<rect x="30.90" y="420.12" width="1.10" height="0.60" fill="#858585" />
<rect x="30.90" y="421.87" width="1.10" height="0.60" fill="#858585" />
<rect x="30.90" y="423.61" width="1.10" height="0.60" fill="#858585" />
<rect x="30.90" y="425.36" width="1.10" height="0.60" fill="#858585" />
<text x="26.90" y="413.85" font-size="3.7" fill="#bcbcbc" >9</text>
<text x="26.90" y="417.25" font-size="3.7" fill="#bcbcbc" >5</text>
<text x="26.90" y="420.65" font-size="3.7" fill="#bcbcbc" >0</text>
<rect x="26.20" y="427.15" width="5.80" height="0.50" fill="#8a8a8a" />
<rect x="30.90" y="428.84" width="1.10" height="0.60" fill="#858585" />
<rect x="30.90" y="430.59" width="1.10" height="0.60" fill="#858585" />
<rect x="30.90" y="432.33" width="1.10" height="0.60" fill="#858585" />
<rect x="30.90" y="434.08" width="1.10" height="0.60" fill="#858585" />
<rect x="30.10" y="435.82" width="1.90" height="0.60" fill="#8e8e8e" />
<rect x="30.90" y="437.57" width="1.10" height="0.60" fill="#858585" />
<rect x="30.90" y="439.31" width="1.10" height="0.60" fill="#858585" />
<rect x="30.90" y="441.06" width="1.10" height="0.60" fill="#858585" />
<rect x="30.90" y="442.80" width="1.10" height="0.60" fill="#858585" />
<text x="26.90" y="431.30" font-size="3.7" fill="#bcbcbc" >1</text>
<text x="26.90" y="434.70" font-size="3.7" fill="#bcbcbc" >0</text>
<text x="26.90" y="438.10" font-size="3.7" fill="#bcbcbc" >0</text>
<text x="26.90" y="441.50" font-size="3.7" fill="#bcbcbc" >0</text>
<rect x="26.20" y="444.60" width="5.80" height="0.50" fill="#8a8a8a" />
<rect x="30.90" y="446.30" width="1.10" height="0.60" fill="#858585" />
<rect x="30.90" y="448.04" width="1.10" height="0.60" fill="#858585" />
<rect x="30.90" y="449.79" width="1.10" height="0.60" fill="#858585" />
<rect x="30.90" y="451.53" width="1.10" height="0.60" fill="#858585" />
<rect x="30.10" y="453.28" width="1.90" height="0.60" fill="#8e8e8e" />
<rect x="30.90" y="455.02" width="1.10" height="0.60" fill="#858585" />
<rect x="30.90" y="456.76" width="1.10" height="0.60" fill="#858585" />
<rect x="30.90" y="458.51" width="1.10" height="0.60" fill="#858585" />
<rect x="30.90" y="460.25" width="1.10" height="0.60" fill="#858585" />
<text x="26.90" y="448.75" font-size="3.7" fill="#bcbcbc" >1</text>
<text x="26.90" y="452.15" font-size="3.7" fill="#bcbcbc" >0</text>
<text x="26.90" y="455.55" font-size="3.7" fill="#bcbcbc" >5</text>
<text x="26.90" y="458.95" font-size="3.7" fill="#bcbcbc" >0</text>
<rect x="26.20" y="462.05" width="5.80" height="0.50" fill="#8a8a8a" />
<rect x="30.90" y="463.74" width="1.10" height="0.60" fill="#858585" />
<rect x="30.90" y="465.49" width="1.10" height="0.60" fill="#858585" />
<rect x="30.90" y="467.23" width="1.10" height="0.60" fill="#858585" />
<rect x="30.90" y="468.98" width="1.10" height="0.60" fill="#858585" />
<rect x="30.10" y="470.72" width="1.90" height="0.60" fill="#8e8e8e" />
<rect x="30.90" y="472.47" width="1.10" height="0.60" fill="#858585" />
<rect x="30.90" y="474.21" width="1.10" height="0.60" fill="#858585" />
<rect x="30.90" y="475.96" width="1.10" height="0.60" fill="#858585" />
<rect x="30.90" y="477.70" width="1.10" height="0.60" fill="#858585" />
<text x="26.90" y="466.20" font-size="3.7" fill="#bcbcbc" >1</text>
<text x="26.90" y="469.60" font-size="3.7" fill="#bcbcbc" >1</text>
<text x="26.90" y="473.00" font-size="3.7" fill="#bcbcbc" >0</text>
<text x="26.90" y="476.40" font-size="3.7" fill="#bcbcbc" >0</text>
<rect x="26.20" y="479.50" width="5.80" height="0.50" fill="#8a8a8a" />
<rect x="30.90" y="481.19" width="1.10" height="0.60" fill="#858585" />
<rect x="30.90" y="482.94" width="1.10" height="0.60" fill="#858585" />
<text x="26.90" y="483.65" font-size="3.7" fill="#bcbcbc" >1</text>
<text x="26.90" y="487.05" font-size="3.7" fill="#bcbcbc" >1</text>
<text x="26.90" y="490.45" font-size="3.7" fill="#bcbcbc" >5</text>
<text x="26.90" y="493.85" font-size="3.7" fill="#bcbcbc" >0</text>
</g>
<rect x="790.80" y="23.10" width="2.20" height="1.80" fill="none" stroke="#9a9a9a" stroke-width=".45"/>
<rect x="703.30" y="26.00" width="92.00" height="6.00" fill="#424242" />
<rect x="704.40" y="26.20" width="20.80" height="5.80" fill="#535353" />
<path d="M705.80 27.20 L709.60 27.20 L709.60 31.00 L705.80 31.00 L705.80 27.20M706.94 28.26 L708.46 28.26M706.75 29.10 L708.65 29.78M707.13 30.32 L708.27 30.32M711.54 27.20 L710.40 28.91M710.97 28.34 L710.97 31.00M711.92 28.34 L714.20 28.34M712.11 29.67 L714.20 29.67M713.14 27.20 L713.14 31.00M715.00 27.39 L718.61 27.39 L718.61 28.53 L715.00 28.53M715.00 27.39 L715.00 31.00M715.76 29.29 L718.61 29.29M716.14 30.16 L718.61 30.16M717.09 29.29 L716.33 31.00 L718.61 31.00M719.98 27.20 L719.98 31.00M719.98 28.34 L721.31 28.34M721.69 27.39 L723.40 27.39 L723.40 29.10 L721.69 29.10 L721.69 27.39M721.69 30.05 L723.40 30.05M722.56 29.10 L722.56 31.00" stroke="#c8c8c8" stroke-width="0.57" opacity="0.74" fill="none"/>
<path d="M788.6 29.2 l1 -0.8 M788.6 29.2 l1 0.8 M790 28.3h3 M790 29.2h3 M790 30.1h3" stroke="#b0b0b0" stroke-width=".45"/>
<rect x="703.80" y="32.00" width="85.70" height="272.60" fill="#444444" />
<rect x="704.10" y="32.00" width="85.40" height="7.23" fill="#535353" />
<rect x="706.50" y="33.50" width="3.90" height="3.90" fill="none" stroke="#454545" stroke-width=".65"/>
<rect x="711.60" y="32.00" width="0.50" height="7.23" fill="#4c4c4c" />
<rect x="715.00" y="33.10" width="5.80" height="4.90" fill="#7c7c7c" />
<path d="M715.5 33.70h4.8M715.5 35.30h4.8M715.5 36.90h4.8" stroke="#b4b4b4" stroke-width=".6"/>
<path d="M726.83 33.50 L726.83 35.10M726.02 34.22 L728.13 34.22M725.85 35.10 L728.30 35.10M726.57 35.10 L726.18 36.30M727.55 35.10 L727.55 36.30M725.20 34.90 L725.69 35.50M725.20 37.18 L728.46 37.30M729.59 33.50 L729.59 37.50M729.59 34.70 L730.73 34.70M731.05 33.70 L732.52 33.70 L732.52 35.50 L731.05 35.50 L731.05 33.70M731.05 36.50 L732.52 36.50M731.80 35.50 L731.80 37.50M733.32 33.70 L736.42 33.70 L736.42 34.90 L733.32 34.90M733.32 33.70 L733.32 37.50M733.97 35.70 L736.42 35.70M734.30 36.62 L736.42 36.62M735.11 35.70 L734.46 37.50 L736.42 37.50M738.36 33.50 L737.38 35.30M737.87 34.70 L737.87 37.50M738.68 34.70 L740.64 34.70M738.85 36.10 L740.64 36.10M739.73 33.50 L739.73 37.50" stroke="#ffffff" stroke-width="0.63" opacity="0.97" fill="none"/>
<rect x="704.10" y="40.03" width="85.40" height="7.23" fill="#535353" />
<rect x="706.50" y="41.53" width="3.90" height="3.90" fill="none" stroke="#454545" stroke-width=".65"/>
<rect x="711.60" y="40.03" width="0.50" height="7.23" fill="#4c4c4c" />
<rect x="715.00" y="41.13" width="5.80" height="4.90" fill="#7c7c7c" />
<path d="M715.5 41.73h4.8M715.5 43.33h4.8M715.5 44.93h4.8" stroke="#b4b4b4" stroke-width=".6"/>
<path d="M726.18 41.53 L725.20 43.33M725.69 42.73 L725.69 45.53M726.50 42.73 L728.46 42.73M726.67 44.13 L728.46 44.13M727.55 41.53 L727.55 45.53M729.26 42.33 L732.52 42.33M730.89 41.53 L730.89 45.53M729.75 43.33 L732.03 43.33 L732.03 44.73 L729.75 44.73 L729.75 43.33M734.30 41.53 L733.32 43.13 L734.46 43.53 L733.32 45.53M734.95 41.85 L736.58 41.85 L736.58 43.21 L734.95 43.21 L734.95 41.85M734.95 43.93 L734.95 45.53M734.95 43.93 L736.58 43.93 L736.58 45.53M735.77 43.93 L735.77 45.53M739.01 41.53 L739.01 43.13M738.20 42.25 L740.31 42.25M738.03 43.13 L740.48 43.13M738.75 43.13 L738.36 44.33M739.73 43.13 L739.73 44.33M737.38 42.93 L737.87 43.53M737.38 45.21 L740.64 45.33" stroke="#ffffff" stroke-width="0.63" opacity="0.97" fill="none"/>
<rect x="704.10" y="48.06" width="85.40" height="7.23" fill="#535353" />
<rect x="706.50" y="49.56" width="3.90" height="3.90" fill="none" stroke="#454545" stroke-width=".65"/>
<rect x="711.60" y="48.06" width="0.50" height="7.23" fill="#4c4c4c" />
<rect x="715.00" y="49.16" width="5.80" height="4.90" fill="#7c7c7c" />
<path d="M715.5 49.76h4.8M715.5 51.36h4.8M715.5 52.96h4.8" stroke="#b4b4b4" stroke-width=".6"/>
<path d="M726.18 49.56 L725.20 51.16 L726.34 51.56 L725.20 53.56M726.83 49.88 L728.46 49.88 L728.46 51.24 L726.83 51.24 L726.83 49.88M726.83 51.96 L726.83 53.56M726.83 51.96 L728.46 51.96 L728.46 53.56M727.65 51.96 L727.65 53.56M729.59 49.56 L729.59 53.56M729.59 50.76 L730.73 50.76M731.05 49.76 L732.52 49.76 L732.52 51.56 L731.05 51.56 L731.05 49.76M731.05 52.56 L732.52 52.56M731.80 51.56 L731.80 53.56M733.32 50.36 L736.58 50.36M734.95 49.56 L734.95 53.56M733.81 51.36 L736.09 51.36 L736.09 52.76 L733.81 52.76 L733.81 51.36M739.01 49.56 L739.01 50.36M737.38 50.56 L740.64 50.56M738.03 51.16 L740.15 53.56M739.99 51.16 L737.87 53.56M742.42 49.56 L741.44 51.36M741.93 50.76 L741.93 53.56M742.74 50.76 L744.70 50.76M742.91 52.16 L744.70 52.16M743.79 49.56 L743.79 53.56" stroke="#ffffff" stroke-width="0.63" opacity="0.97" fill="none"/>
<rect x="704.10" y="56.09" width="85.40" height="7.23" fill="#535353" />
<rect x="706.50" y="57.59" width="3.90" height="3.90" fill="none" stroke="#454545" stroke-width=".65"/>
<rect x="711.60" y="56.09" width="0.50" height="7.23" fill="#4c4c4c" />
<rect x="715.00" y="57.19" width="5.80" height="4.90" fill="#7c7c7c" />
<path d="M715.5 57.79h4.8M715.5 59.39h4.8M715.5 60.99h4.8" stroke="#b4b4b4" stroke-width=".6"/>
<path d="M726.83 57.59 L726.83 59.19M726.02 58.31 L728.13 58.31M725.85 59.19 L728.30 59.19M726.57 59.19 L726.18 60.39M727.55 59.19 L727.55 60.39M725.20 58.99 L725.69 59.59M725.20 61.27 L728.46 61.39M730.89 57.59 L730.89 59.19M730.08 58.31 L732.19 58.31M729.91 59.19 L732.36 59.19M730.63 59.19 L730.24 60.39M731.61 59.19 L731.61 60.39M729.26 58.99 L729.75 59.59M729.26 61.27 L732.52 61.39M734.95 57.59 L734.95 59.19M734.14 58.31 L736.25 58.31M733.97 59.19 L736.42 59.19M734.69 59.19 L734.30 60.39M735.67 59.19 L735.67 60.39M733.32 58.99 L733.81 59.59M733.32 61.27 L736.58 61.39M737.71 57.59 L737.71 61.59M737.71 58.79 L738.85 58.79M739.17 57.79 L740.64 57.79 L740.64 59.59 L739.17 59.59 L739.17 57.79M739.17 60.59 L740.64 60.59M739.92 59.59 L739.92 61.59M741.77 57.59 L741.77 61.59M741.77 58.79 L742.91 58.79M743.23 57.79 L744.70 57.79 L744.70 59.59 L743.23 59.59 L743.23 57.79M743.23 60.59 L744.70 60.59M743.98 59.59 L743.98 61.59" stroke="#ffffff" stroke-width="0.63" opacity="0.97" fill="none"/>
<rect x="704.10" y="64.12" width="85.40" height="7.23" fill="#535353" />
<rect x="706.50" y="65.62" width="3.90" height="3.90" fill="none" stroke="#454545" stroke-width=".65"/>
<rect x="711.60" y="64.12" width="0.50" height="7.23" fill="#4c4c4c" />
<rect x="715.00" y="65.22" width="5.80" height="4.90" fill="#7c7c7c" />
<path d="M715.5 65.82h4.8M715.5 67.42h4.8M715.5 69.02h4.8" stroke="#b4b4b4" stroke-width=".6"/>
<path d="M726.18 65.62 L725.20 67.42M725.69 66.82 L725.69 69.62M726.50 66.82 L728.46 66.82M726.67 68.22 L728.46 68.22M727.55 65.62 L727.55 69.62M730.24 65.62 L729.26 67.42M729.75 66.82 L729.75 69.62M730.56 66.82 L732.52 66.82M730.73 68.22 L732.52 68.22M731.61 65.62 L731.61 69.62M733.32 65.82 L736.42 65.82 L736.42 67.02 L733.32 67.02M733.32 65.82 L733.32 69.62M733.97 67.82 L736.42 67.82M734.30 68.74 L736.42 68.74M735.11 67.82 L734.46 69.62 L736.42 69.62M737.71 65.62 L737.71 69.62M737.71 66.82 L738.85 66.82M739.17 65.82 L740.64 65.82 L740.64 67.62 L739.17 67.62 L739.17 65.82M739.17 68.62 L740.64 68.62M739.92 67.62 L739.92 69.62" stroke="#ffffff" stroke-width="0.63" opacity="0.97" fill="none"/>
<rect x="704.10" y="72.15" width="85.40" height="7.23" fill="#535353" />
<rect x="706.50" y="73.65" width="3.90" height="3.90" fill="none" stroke="#454545" stroke-width=".65"/>
<rect x="711.60" y="72.15" width="0.50" height="7.23" fill="#4c4c4c" />
<rect x="715.00" y="73.25" width="5.80" height="4.90" fill="#7c7c7c" />
<path d="M715.5 73.85h4.8M715.5 75.45h4.8M715.5 77.05h4.8" stroke="#b4b4b4" stroke-width=".6"/>
<path d="M726.18 73.65 L725.20 75.45M725.69 74.85 L725.69 77.65M726.50 74.85 L728.46 74.85M726.67 76.25 L728.46 76.25M727.55 73.65 L727.55 77.65M730.89 73.65 L730.89 74.45M729.26 74.65 L732.52 74.65M729.91 75.25 L732.03 77.65M731.87 75.25 L729.75 77.65M733.32 73.85 L736.42 73.85 L736.42 75.05 L733.32 75.05M733.32 73.85 L733.32 77.65M733.97 75.85 L736.42 75.85M734.30 76.77 L736.42 76.77M735.11 75.85 L734.46 77.65 L736.42 77.65M737.71 73.65 L737.71 77.65M737.71 74.85 L738.85 74.85M739.17 73.85 L740.64 73.85 L740.64 75.65 L739.17 75.65 L739.17 73.85M739.17 76.65 L740.64 76.65M739.92 75.65 L739.92 77.65" stroke="#ffffff" stroke-width="0.63" opacity="0.97" fill="none"/>
<rect x="704.10" y="80.18" width="85.40" height="7.23" fill="#535353" />
<rect x="706.50" y="81.68" width="3.90" height="3.90" fill="none" stroke="#454545" stroke-width=".65"/>
<rect x="711.60" y="80.18" width="0.50" height="7.23" fill="#4c4c4c" />
<rect x="715.00" y="81.28" width="5.80" height="4.90" fill="#7c7c7c" />
<path d="M715.5 81.88h4.8M715.5 83.48h4.8M715.5 85.08h4.8" stroke="#b4b4b4" stroke-width=".6"/>
<path d="M725.20 81.88 L728.30 81.88 L728.30 83.08 L725.20 83.08M725.20 81.88 L725.20 85.68M725.85 83.88 L728.30 83.88M726.18 84.80 L728.30 84.80M726.99 83.88 L726.34 85.68 L728.30 85.68M729.26 82.48 L732.52 82.48M730.89 81.68 L730.89 85.68M729.75 83.48 L732.03 83.48 L732.03 84.88 L729.75 84.88 L729.75 83.48M734.95 81.68 L734.95 83.28M734.14 82.40 L736.25 82.40M733.97 83.28 L736.42 83.28M734.69 83.28 L734.30 84.48M735.67 83.28 L735.67 84.48M733.32 83.08 L733.81 83.68M733.32 85.36 L736.58 85.48M739.01 81.68 L739.01 82.48M737.38 82.68 L740.64 82.68M738.03 83.28 L740.15 85.68M739.99 83.28 L737.87 85.68M741.77 81.68 L741.77 85.68M741.77 82.88 L742.91 82.88M743.23 81.88 L744.70 81.88 L744.70 83.68 L743.23 83.68 L743.23 81.88M743.23 84.68 L744.70 84.68M743.98 83.68 L743.98 85.68" stroke="#ffffff" stroke-width="0.63" opacity="0.97" fill="none"/>
<rect x="704.10" y="88.21" width="85.40" height="7.23" fill="#535353" />
<rect x="706.50" y="89.71" width="3.90" height="3.90" fill="none" stroke="#454545" stroke-width=".65"/>
<rect x="711.60" y="88.21" width="0.50" height="7.23" fill="#4c4c4c" />
<rect x="715.00" y="89.31" width="5.80" height="4.90" fill="#7c7c7c" />
<path d="M715.5 89.91h4.8M715.5 91.51h4.8M715.5 93.11h4.8" stroke="#b4b4b4" stroke-width=".6"/>
<path d="M726.83 89.71 L726.83 91.31M726.02 90.43 L728.13 90.43M725.85 91.31 L728.30 91.31M726.57 91.31 L726.18 92.51M727.55 91.31 L727.55 92.51M725.20 91.11 L725.69 91.71M725.20 93.39 L728.46 93.51M730.24 89.71 L729.26 91.31 L730.40 91.71 L729.26 93.71M730.89 90.03 L732.52 90.03 L732.52 91.39 L730.89 91.39 L730.89 90.03M730.89 92.11 L730.89 93.71M730.89 92.11 L732.52 92.11 L732.52 93.71M731.71 92.11 L731.71 93.71M734.30 89.71 L733.32 91.51M733.81 90.91 L733.81 93.71M734.62 90.91 L736.58 90.91M734.79 92.31 L736.58 92.31M735.67 89.71 L735.67 93.71M737.71 89.71 L737.71 93.71M737.71 90.91 L738.85 90.91M739.17 89.91 L740.64 89.91 L740.64 91.71 L739.17 91.71 L739.17 89.91M739.17 92.71 L740.64 92.71M739.92 91.71 L739.92 93.71M743.07 89.71 L743.07 90.51M741.44 90.71 L744.70 90.71M742.09 91.31 L744.21 93.71M744.05 91.31 L741.93 93.71" stroke="#ffffff" stroke-width="0.63" opacity="0.97" fill="none"/>
<rect x="704.10" y="96.24" width="85.40" height="7.23" fill="#535353" />
<rect x="706.50" y="97.74" width="3.90" height="3.90" fill="none" stroke="#454545" stroke-width=".65"/>
<rect x="711.60" y="96.24" width="0.50" height="7.23" fill="#4c4c4c" />
<rect x="715.00" y="97.34" width="5.80" height="4.90" fill="#7c7c7c" />
<path d="M715.5 97.94h4.8M715.5 99.54h4.8M715.5 101.14h4.8" stroke="#b4b4b4" stroke-width=".6"/>
<path d="M725.20 97.74 L728.46 97.74 L728.46 101.74 L725.20 101.74 L725.20 97.74M726.18 98.86 L727.48 98.86M726.02 99.74 L727.65 100.46M726.34 101.02 L727.32 101.02M729.26 97.94 L732.36 97.94 L732.36 99.14 L729.26 99.14M729.26 97.94 L729.26 101.74M729.91 99.94 L732.36 99.94M730.24 100.86 L732.36 100.86M731.05 99.94 L730.40 101.74 L732.36 101.74M734.30 97.74 L733.32 99.34 L734.46 99.74 L733.32 101.74M734.95 98.06 L736.58 98.06 L736.58 99.42 L734.95 99.42 L734.95 98.06M734.95 100.14 L734.95 101.74M734.95 100.14 L736.58 100.14 L736.58 101.74M735.77 100.14 L735.77 101.74M737.38 97.74 L740.64 97.74 L740.64 101.74 L737.38 101.74 L737.38 97.74M738.36 98.86 L739.66 98.86M738.20 99.74 L739.83 100.46M738.52 101.02 L739.50 101.02" stroke="#ffffff" stroke-width="0.63" opacity="0.97" fill="none"/>
<rect x="704.10" y="104.27" width="85.40" height="7.23" fill="#535353" />
<rect x="706.50" y="105.77" width="3.90" height="3.90" fill="none" stroke="#454545" stroke-width=".65"/>
<rect x="711.60" y="104.27" width="0.50" height="7.23" fill="#4c4c4c" />
<rect x="715.00" y="105.37" width="5.80" height="4.90" fill="#7c7c7c" />
<path d="M715.5 105.97h4.8M715.5 107.57h4.8M715.5 109.17h4.8" stroke="#b4b4b4" stroke-width=".6"/>
<path d="M725.20 106.57 L728.46 106.57M726.83 105.77 L726.83 109.77M725.69 107.57 L727.97 107.57 L727.97 108.97 L725.69 108.97 L725.69 107.57M729.26 106.57 L732.52 106.57M730.89 105.77 L730.89 109.77M729.75 107.57 L732.03 107.57 L732.03 108.97 L729.75 108.97 L729.75 107.57M733.65 105.77 L733.65 109.77M733.65 106.97 L734.79 106.97M735.11 105.97 L736.58 105.97 L736.58 107.77 L735.11 107.77 L735.11 105.97M735.11 108.77 L736.58 108.77M735.86 107.77 L735.86 109.77M738.36 105.77 L737.38 107.57M737.87 106.97 L737.87 109.77M738.68 106.97 L740.64 106.97M738.85 108.37 L740.64 108.37M739.73 105.77 L739.73 109.77" stroke="#ffffff" stroke-width="0.63" opacity="0.97" fill="none"/>
<rect x="704.10" y="112.30" width="85.40" height="7.23" fill="#535353" />
<rect x="706.50" y="113.80" width="3.90" height="3.90" fill="none" stroke="#454545" stroke-width=".65"/>
<rect x="711.60" y="112.30" width="0.50" height="7.23" fill="#4c4c4c" />
<rect x="715.00" y="113.40" width="5.80" height="4.90" fill="#7c7c7c" />
<path d="M715.5 114.00h4.8M715.5 115.60h4.8M715.5 117.20h4.8" stroke="#b4b4b4" stroke-width=".6"/>
<path d="M726.18 113.80 L725.20 115.40 L726.34 115.80 L725.20 117.80M726.83 114.12 L728.46 114.12 L728.46 115.48 L726.83 115.48 L726.83 114.12M726.83 116.20 L726.83 117.80M726.83 116.20 L728.46 116.20 L728.46 117.80M727.65 116.20 L727.65 117.80M729.59 113.80 L729.59 117.80M729.59 115.00 L730.73 115.00M731.05 114.00 L732.52 114.00 L732.52 115.80 L731.05 115.80 L731.05 114.00M731.05 116.80 L732.52 116.80M731.80 115.80 L731.80 117.80M733.32 114.60 L736.58 114.60M734.95 113.80 L734.95 117.80M733.81 115.60 L736.09 115.60 L736.09 117.00 L733.81 117.00 L733.81 115.60M737.38 114.00 L740.48 114.00 L740.48 115.20 L737.38 115.20M737.38 114.00 L737.38 117.80M738.03 116.00 L740.48 116.00M738.36 116.92 L740.48 116.92M739.17 116.00 L738.52 117.80 L740.48 117.80" stroke="#ffffff" stroke-width="0.63" opacity="0.97" fill="none"/>
<rect x="704.10" y="120.33" width="85.40" height="7.23" fill="#535353" />
<rect x="706.50" y="121.83" width="3.90" height="3.90" fill="none" stroke="#454545" stroke-width=".65"/>
<rect x="711.60" y="120.33" width="0.50" height="7.23" fill="#4c4c4c" />
<rect x="715.00" y="121.43" width="5.80" height="4.90" fill="#7c7c7c" />
<path d="M715.5 122.03h4.8M715.5 123.63h4.8M715.5 125.23h4.8" stroke="#b4b4b4" stroke-width=".6"/>
<path d="M726.18 121.83 L725.20 123.43 L726.34 123.83 L725.20 125.83M726.83 122.15 L728.46 122.15 L728.46 123.51 L726.83 123.51 L726.83 122.15M726.83 124.23 L726.83 125.83M726.83 124.23 L728.46 124.23 L728.46 125.83M727.65 124.23 L727.65 125.83M729.26 122.63 L732.52 122.63M730.89 121.83 L730.89 125.83M729.75 123.63 L732.03 123.63 L732.03 125.03 L729.75 125.03 L729.75 123.63M733.32 122.03 L736.42 122.03 L736.42 123.23 L733.32 123.23M733.32 122.03 L733.32 125.83M733.97 124.03 L736.42 124.03M734.30 124.95 L736.42 124.95M735.11 124.03 L734.46 125.83 L736.42 125.83M737.38 122.63 L740.64 122.63M739.01 121.83 L739.01 125.83M737.87 123.63 L740.15 123.63 L740.15 125.03 L737.87 125.03 L737.87 123.63" stroke="#ffffff" stroke-width="0.63" opacity="0.97" fill="none"/>
<rect x="704.10" y="128.36" width="85.40" height="7.23" fill="#535353" />
<rect x="706.50" y="129.86" width="3.90" height="3.90" fill="none" stroke="#454545" stroke-width=".65"/>
<rect x="711.60" y="128.36" width="0.50" height="7.23" fill="#4c4c4c" />
<rect x="715.00" y="129.46" width="5.80" height="4.90" fill="#7c7c7c" />
<path d="M715.5 130.06h4.8M715.5 131.66h4.8M715.5 133.26h4.8" stroke="#b4b4b4" stroke-width=".6"/>
<path d="M726.83 129.86 L726.83 131.46M726.02 130.58 L728.13 130.58M725.85 131.46 L728.30 131.46M726.57 131.46 L726.18 132.66M727.55 131.46 L727.55 132.66M725.20 131.26 L725.69 131.86M725.20 133.54 L728.46 133.66M729.26 130.66 L732.52 130.66M730.89 129.86 L730.89 133.86M729.75 131.66 L732.03 131.66 L732.03 133.06 L729.75 133.06 L729.75 131.66" stroke="#ffffff" stroke-width="0.63" opacity="0.97" fill="none"/>
<rect x="704.10" y="136.39" width="85.40" height="7.23" fill="#535353" />
<rect x="706.50" y="137.89" width="3.90" height="3.90" fill="none" stroke="#454545" stroke-width=".65"/>
<rect x="711.60" y="136.39" width="0.50" height="7.23" fill="#4c4c4c" />
<rect x="715.00" y="137.49" width="5.80" height="4.90" fill="#e8e8e8" opacity=".9"/>
<path d="M715.4 139.29h5M715.4 140.79h5" stroke="#666" stroke-width=".45"/>
<path d="M725.20 137.89 L728.46 137.89 L728.46 141.89 L725.20 141.89 L725.20 137.89M726.18 139.01 L727.48 139.01M726.02 139.89 L727.65 140.61M726.34 141.17 L727.32 141.17M730.24 137.89 L729.26 139.49 L730.40 139.89 L729.26 141.89M730.89 138.21 L732.52 138.21 L732.52 139.57 L730.89 139.57 L730.89 138.21M730.89 140.29 L730.89 141.89M730.89 140.29 L732.52 140.29 L732.52 141.89M731.71 140.29 L731.71 141.89" stroke="#ffffff" stroke-width="0.63" opacity="0.97" fill="none"/>
<rect x="704.10" y="144.42" width="85.40" height="7.23" fill="#535353" />
<rect x="706.50" y="145.92" width="3.90" height="3.90" fill="none" stroke="#454545" stroke-width=".65"/>
<rect x="711.60" y="144.42" width="0.50" height="7.23" fill="#4c4c4c" />
<rect x="715.00" y="145.52" width="5.80" height="4.90" fill="#7c7c7c" />
<path d="M715.5 146.12h4.8M715.5 147.72h4.8M715.5 149.32h4.8" stroke="#b4b4b4" stroke-width=".6"/>
<path d="M726.18 145.92 L725.20 147.72M725.69 147.12 L725.69 149.92M726.50 147.12 L728.46 147.12M726.67 148.52 L728.46 148.52M727.55 145.92 L727.55 149.92M730.24 145.92 L729.26 147.52 L730.40 147.92 L729.26 149.92M730.89 146.24 L732.52 146.24 L732.52 147.60 L730.89 147.60 L730.89 146.24M730.89 148.32 L730.89 149.92M730.89 148.32 L732.52 148.32 L732.52 149.92M731.71 148.32 L731.71 149.92M734.30 145.92 L733.32 147.52 L734.46 147.92 L733.32 149.92M734.95 146.24 L736.58 146.24 L736.58 147.60 L734.95 147.60 L734.95 146.24M734.95 148.32 L734.95 149.92M734.95 148.32 L736.58 148.32 L736.58 149.92M735.77 148.32 L735.77 149.92M737.38 145.92 L740.64 145.92 L740.64 149.92 L737.38 149.92 L737.38 145.92M738.36 147.04 L739.66 147.04M738.20 147.92 L739.83 148.64M738.52 149.20 L739.50 149.20" stroke="#ffffff" stroke-width="0.63" opacity="0.97" fill="none"/>
<rect x="704.10" y="152.45" width="85.40" height="7.23" fill="#535353" />
<rect x="706.50" y="153.95" width="3.90" height="3.90" fill="none" stroke="#454545" stroke-width=".65"/>
<rect x="711.60" y="152.45" width="0.50" height="7.23" fill="#4c4c4c" />
<rect x="715.00" y="153.55" width="5.80" height="4.90" fill="#7c7c7c" />
<path d="M715.5 154.15h4.8M715.5 155.75h4.8M715.5 157.35h4.8" stroke="#b4b4b4" stroke-width=".6"/>
<path d="M725.20 153.95 L728.46 153.95 L728.46 157.95 L725.20 157.95 L725.20 153.95M726.18 155.07 L727.48 155.07M726.02 155.95 L727.65 156.67M726.34 157.23 L727.32 157.23M730.89 153.95 L730.89 154.75M729.26 154.95 L732.52 154.95M729.91 155.55 L732.03 157.95M731.87 155.55 L729.75 157.95M733.65 153.95 L733.65 157.95M733.65 155.15 L734.79 155.15M735.11 154.15 L736.58 154.15 L736.58 155.95 L735.11 155.95 L735.11 154.15M735.11 156.95 L736.58 156.95M735.86 155.95 L735.86 157.95M738.36 153.95 L737.38 155.55 L738.52 155.95 L737.38 157.95M739.01 154.27 L740.64 154.27 L740.64 155.63 L739.01 155.63 L739.01 154.27M739.01 156.35 L739.01 157.95M739.01 156.35 L740.64 156.35 L740.64 157.95M739.83 156.35 L739.83 157.95" stroke="#ffffff" stroke-width="0.63" opacity="0.97" fill="none"/>
<rect x="704.10" y="160.48" width="85.40" height="7.23" fill="#535353" />
<rect x="706.50" y="161.98" width="3.90" height="3.90" fill="none" stroke="#454545" stroke-width=".65"/>
<rect x="711.60" y="160.48" width="0.50" height="7.23" fill="#4c4c4c" />
<rect x="715.00" y="161.58" width="5.80" height="4.90" fill="#7c7c7c" />
<path d="M715.5 162.18h4.8M715.5 163.78h4.8M715.5 165.38h4.8" stroke="#b4b4b4" stroke-width=".6"/>
<path d="M725.20 162.18 L728.30 162.18 L728.30 163.38 L725.20 163.38M725.20 162.18 L725.20 165.98M725.85 164.18 L728.30 164.18M726.18 165.10 L728.30 165.10M726.99 164.18 L726.34 165.98 L728.30 165.98M729.26 162.18 L732.36 162.18 L732.36 163.38 L729.26 163.38M729.26 162.18 L729.26 165.98M729.91 164.18 L732.36 164.18M730.24 165.10 L732.36 165.10M731.05 164.18 L730.40 165.98 L732.36 165.98M734.95 161.98 L734.95 162.78M733.32 162.98 L736.58 162.98M733.97 163.58 L736.09 165.98M735.93 163.58 L733.81 165.98M738.36 161.98 L737.38 163.58 L738.52 163.98 L737.38 165.98M739.01 162.30 L740.64 162.30 L740.64 163.66 L739.01 163.66 L739.01 162.30M739.01 164.38 L739.01 165.98M739.01 164.38 L740.64 164.38 L740.64 165.98M739.83 164.38 L739.83 165.98" stroke="#ffffff" stroke-width="0.63" opacity="0.97" fill="none"/>
<rect x="704.10" y="168.51" width="85.40" height="7.23" fill="#535353" />
<rect x="706.50" y="170.01" width="3.90" height="3.90" fill="none" stroke="#454545" stroke-width=".65"/>
<rect x="711.60" y="168.51" width="0.50" height="7.23" fill="#4c4c4c" />
<rect x="715.00" y="169.61" width="5.80" height="4.90" fill="#7c7c7c" />
<path d="M715.5 170.21h4.8M715.5 171.81h4.8M715.5 173.41h4.8" stroke="#b4b4b4" stroke-width=".6"/>
<path d="M725.20 170.81 L728.46 170.81M726.83 170.01 L726.83 174.01M725.69 171.81 L727.97 171.81 L727.97 173.21 L725.69 173.21 L725.69 171.81M730.89 170.01 L730.89 171.61M730.08 170.73 L732.19 170.73M729.91 171.61 L732.36 171.61M730.63 171.61 L730.24 172.81M731.61 171.61 L731.61 172.81M729.26 171.41 L729.75 172.01M729.26 173.69 L732.52 173.81M734.95 170.01 L734.95 171.61M734.14 170.73 L736.25 170.73M733.97 171.61 L736.42 171.61M734.69 171.61 L734.30 172.81M735.67 171.61 L735.67 172.81M733.32 171.41 L733.81 172.01M733.32 173.69 L736.58 173.81M738.36 170.01 L737.38 171.61 L738.52 172.01 L737.38 174.01M739.01 170.33 L740.64 170.33 L740.64 171.69 L739.01 171.69 L739.01 170.33M739.01 172.41 L739.01 174.01M739.01 172.41 L740.64 172.41 L740.64 174.01M739.83 172.41 L739.83 174.01M743.07 170.01 L743.07 170.81M741.44 171.01 L744.70 171.01M742.09 171.61 L744.21 174.01M744.05 171.61 L741.93 174.01M745.83 170.01 L745.83 174.01M745.83 171.21 L746.97 171.21M747.29 170.21 L748.76 170.21 L748.76 172.01 L747.29 172.01 L747.29 170.21M747.29 173.01 L748.76 173.01M748.04 172.01 L748.04 174.01M749.56 170.81 L752.82 170.81M751.19 170.01 L751.19 174.01M750.05 171.81 L752.33 171.81 L752.33 173.21 L750.05 173.21 L750.05 171.81" stroke="#ffffff" stroke-width="0.63" opacity="0.97" fill="none"/>
<rect x="704.10" y="176.54" width="85.40" height="7.23" fill="#535353" />
<rect x="706.50" y="178.04" width="3.90" height="3.90" fill="none" stroke="#454545" stroke-width=".65"/>
<rect x="711.60" y="176.54" width="0.50" height="7.23" fill="#4c4c4c" />
<rect x="715.00" y="177.64" width="5.80" height="4.90" fill="#7c7c7c" />
<path d="M715.5 178.24h4.8M715.5 179.84h4.8M715.5 181.44h4.8" stroke="#b4b4b4" stroke-width=".6"/>
<path d="M725.20 178.84 L728.46 178.84M726.83 178.04 L726.83 182.04M725.69 179.84 L727.97 179.84 L727.97 181.24 L725.69 181.24 L725.69 179.84M729.26 178.84 L732.52 178.84M730.89 178.04 L730.89 182.04M729.75 179.84 L732.03 179.84 L732.03 181.24 L729.75 181.24 L729.75 179.84M733.32 178.84 L736.58 178.84M734.95 178.04 L734.95 182.04M733.81 179.84 L736.09 179.84 L736.09 181.24 L733.81 181.24 L733.81 179.84M738.36 178.04 L737.38 179.84M737.87 179.24 L737.87 182.04M738.68 179.24 L740.64 179.24M738.85 180.64 L740.64 180.64M739.73 178.04 L739.73 182.04" stroke="#ffffff" stroke-width="0.63" opacity="0.97" fill="none"/>
<rect x="704.10" y="184.57" width="85.40" height="7.23" fill="#535353" />
<rect x="706.50" y="186.07" width="3.90" height="3.90" fill="none" stroke="#454545" stroke-width=".65"/>
<rect x="711.60" y="184.57" width="0.50" height="7.23" fill="#4c4c4c" />
<rect x="715.00" y="185.67" width="5.80" height="4.90" fill="#7c7c7c" />
<path d="M715.5 186.27h4.8M715.5 187.87h4.8M715.5 189.47h4.8" stroke="#b4b4b4" stroke-width=".6"/>
<path d="M725.53 186.07 L725.53 190.07M725.53 187.27 L726.67 187.27M726.99 186.27 L728.46 186.27 L728.46 188.07 L726.99 188.07 L726.99 186.27M726.99 189.07 L728.46 189.07M727.74 188.07 L727.74 190.07M729.26 186.87 L732.52 186.87M730.89 186.07 L730.89 190.07M729.75 187.87 L732.03 187.87 L732.03 189.27 L729.75 189.27 L729.75 187.87M734.95 186.07 L734.95 186.87M733.32 187.07 L736.58 187.07M733.97 187.67 L736.09 190.07M735.93 187.67 L733.81 190.07M737.38 186.07 L740.64 186.07 L740.64 190.07 L737.38 190.07 L737.38 186.07M738.36 187.19 L739.66 187.19M738.20 188.07 L739.83 188.79M738.52 189.35 L739.50 189.35" stroke="#ffffff" stroke-width="0.63" opacity="0.97" fill="none"/>
<rect x="704.10" y="192.60" width="85.40" height="7.23" fill="#535353" />
<rect x="706.50" y="194.10" width="3.90" height="3.90" fill="none" stroke="#454545" stroke-width=".65"/>
<rect x="711.60" y="192.60" width="0.50" height="7.23" fill="#4c4c4c" />
<rect x="715.00" y="193.70" width="5.80" height="4.90" fill="#7c7c7c" />
<path d="M715.5 194.30h4.8M715.5 195.90h4.8M715.5 197.50h4.8" stroke="#b4b4b4" stroke-width=".6"/>
<path d="M726.18 194.10 L725.20 195.90M725.69 195.30 L725.69 198.10M726.50 195.30 L728.46 195.30M726.67 196.70 L728.46 196.70M727.55 194.10 L727.55 198.10M729.26 194.10 L732.52 194.10 L732.52 198.10 L729.26 198.10 L729.26 194.10M730.24 195.22 L731.54 195.22M730.08 196.10 L731.71 196.82M730.40 197.38 L731.38 197.38M733.65 194.10 L733.65 198.10M733.65 195.30 L734.79 195.30M735.11 194.30 L736.58 194.30 L736.58 196.10 L735.11 196.10 L735.11 194.30M735.11 197.10 L736.58 197.10M735.86 196.10 L735.86 198.10M738.36 194.10 L737.38 195.70 L738.52 196.10 L737.38 198.10M739.01 194.42 L740.64 194.42 L740.64 195.78 L739.01 195.78 L739.01 194.42M739.01 196.50 L739.01 198.10M739.01 196.50 L740.64 196.50 L740.64 198.10M739.83 196.50 L739.83 198.10" stroke="#ffffff" stroke-width="0.63" opacity="0.97" fill="none"/>
<rect x="704.10" y="200.63" width="85.40" height="7.23" fill="#535353" />
<rect x="706.50" y="202.13" width="3.90" height="3.90" fill="none" stroke="#454545" stroke-width=".65"/>
<rect x="711.60" y="200.63" width="0.50" height="7.23" fill="#4c4c4c" />
<rect x="715.00" y="201.73" width="5.80" height="4.90" fill="#7c7c7c" />
<path d="M715.5 202.33h4.8M715.5 203.93h4.8M715.5 205.53h4.8" stroke="#b4b4b4" stroke-width=".6"/>
<path d="M726.18 202.13 L725.20 203.93M725.69 203.33 L725.69 206.13M726.50 203.33 L728.46 203.33M726.67 204.73 L728.46 204.73M727.55 202.13 L727.55 206.13M730.89 202.13 L730.89 203.73M730.08 202.85 L732.19 202.85M729.91 203.73 L732.36 203.73M730.63 203.73 L730.24 204.93M731.61 203.73 L731.61 204.93M729.26 203.53 L729.75 204.13M729.26 205.81 L732.52 205.93M734.95 202.13 L734.95 202.93M733.32 203.13 L736.58 203.13M733.97 203.73 L736.09 206.13M735.93 203.73 L733.81 206.13M738.36 202.13 L737.38 203.93M737.87 203.33 L737.87 206.13M738.68 203.33 L740.64 203.33M738.85 204.73 L740.64 204.73M739.73 202.13 L739.73 206.13" stroke="#ffffff" stroke-width="0.63" opacity="0.97" fill="none"/>
<rect x="704.10" y="208.66" width="85.40" height="7.23" fill="#535353" />
<rect x="706.50" y="210.16" width="3.90" height="3.90" fill="none" stroke="#454545" stroke-width=".65"/>
<rect x="711.60" y="208.66" width="0.50" height="7.23" fill="#4c4c4c" />
<rect x="715.00" y="209.76" width="5.80" height="4.90" fill="#7c7c7c" />
<path d="M715.5 210.36h4.8M715.5 211.96h4.8M715.5 213.56h4.8" stroke="#b4b4b4" stroke-width=".6"/>
<path d="M726.83 210.16 L726.83 210.96M725.20 211.16 L728.46 211.16M725.85 211.76 L727.97 214.16M727.81 211.76 L725.69 214.16M730.24 210.16 L729.26 211.76 L730.40 212.16 L729.26 214.16M730.89 210.48 L732.52 210.48 L732.52 211.84 L730.89 211.84 L730.89 210.48M730.89 212.56 L730.89 214.16M730.89 212.56 L732.52 212.56 L732.52 214.16M731.71 212.56 L731.71 214.16M734.30 210.16 L733.32 211.96M733.81 211.36 L733.81 214.16M734.62 211.36 L736.58 211.36M734.79 212.76 L736.58 212.76M735.67 210.16 L735.67 214.16M739.01 210.16 L739.01 211.76M738.20 210.88 L740.31 210.88M738.03 211.76 L740.48 211.76M738.75 211.76 L738.36 212.96M739.73 211.76 L739.73 212.96M737.38 211.56 L737.87 212.16M737.38 213.84 L740.64 213.96M743.07 210.16 L743.07 210.96M741.44 211.16 L744.70 211.16M742.09 211.76 L744.21 214.16M744.05 211.76 L741.93 214.16M746.48 210.16 L745.50 211.96M745.99 211.36 L745.99 214.16M746.80 211.36 L748.76 211.36M746.97 212.76 L748.76 212.76M747.85 210.16 L747.85 214.16M749.56 210.16 L752.82 210.16 L752.82 214.16 L749.56 214.16 L749.56 210.16M750.54 211.28 L751.84 211.28M750.38 212.16 L752.01 212.88M750.70 213.44 L751.68 213.44" stroke="#ffffff" stroke-width="0.63" opacity="0.97" fill="none"/>
<rect x="704.10" y="216.69" width="85.40" height="7.23" fill="#535353" />
<rect x="706.50" y="218.19" width="3.90" height="3.90" fill="none" stroke="#454545" stroke-width=".65"/>
<rect x="711.60" y="216.69" width="0.50" height="7.23" fill="#4c4c4c" />
<rect x="715.00" y="217.79" width="5.80" height="4.90" fill="#7c7c7c" />
<path d="M715.5 218.39h4.8M715.5 219.99h4.8M715.5 221.59h4.8" stroke="#b4b4b4" stroke-width=".6"/>
<path d="M725.20 218.99 L728.46 218.99M726.83 218.19 L726.83 222.19M725.69 219.99 L727.97 219.99 L727.97 221.39 L725.69 221.39 L725.69 219.99M730.24 218.19 L729.26 219.79 L730.40 220.19 L729.26 222.19M730.89 218.51 L732.52 218.51 L732.52 219.87 L730.89 219.87 L730.89 218.51M730.89 220.59 L730.89 222.19M730.89 220.59 L732.52 220.59 L732.52 222.19M731.71 220.59 L731.71 222.19M733.32 218.39 L736.42 218.39 L736.42 219.59 L733.32 219.59M733.32 218.39 L733.32 222.19M733.97 220.39 L736.42 220.39M734.30 221.31 L736.42 221.31M735.11 220.39 L734.46 222.19 L736.42 222.19M739.01 218.19 L739.01 219.79M738.20 218.91 L740.31 218.91M738.03 219.79 L740.48 219.79M738.75 219.79 L738.36 220.99M739.73 219.79 L739.73 220.99M737.38 219.59 L737.87 220.19M737.38 221.87 L740.64 221.99" stroke="#ffffff" stroke-width="0.63" opacity="0.97" fill="none"/>
<rect x="704.10" y="224.72" width="85.40" height="7.23" fill="#535353" />
<rect x="706.50" y="226.22" width="3.90" height="3.90" fill="none" stroke="#454545" stroke-width=".65"/>
<rect x="711.60" y="224.72" width="0.50" height="7.23" fill="#4c4c4c" />
<rect x="715.00" y="225.82" width="5.80" height="4.90" fill="#7c7c7c" />
<path d="M715.5 226.42h4.8M715.5 228.02h4.8M715.5 229.62h4.8" stroke="#b4b4b4" stroke-width=".6"/>
<path d="M726.83 226.22 L726.83 227.82M726.02 226.94 L728.13 226.94M725.85 227.82 L728.30 227.82M726.57 227.82 L726.18 229.02M727.55 227.82 L727.55 229.02M725.20 227.62 L725.69 228.22M725.20 229.90 L728.46 230.02M729.59 226.22 L729.59 230.22M729.59 227.42 L730.73 227.42M731.05 226.42 L732.52 226.42 L732.52 228.22 L731.05 228.22 L731.05 226.42M731.05 229.22 L732.52 229.22M731.80 228.22 L731.80 230.22M734.30 226.22 L733.32 228.02M733.81 227.42 L733.81 230.22M734.62 227.42 L736.58 227.42M734.79 228.82 L736.58 228.82M735.67 226.22 L735.67 230.22M738.36 226.22 L737.38 228.02M737.87 227.42 L737.87 230.22M738.68 227.42 L740.64 227.42M738.85 228.82 L740.64 228.82M739.73 226.22 L739.73 230.22" stroke="#ffffff" stroke-width="0.63" opacity="0.97" fill="none"/>
<rect x="704.10" y="232.75" width="85.40" height="7.23" fill="#535353" />
<rect x="706.50" y="234.25" width="3.90" height="3.90" fill="none" stroke="#454545" stroke-width=".65"/>
<rect x="711.60" y="232.75" width="0.50" height="7.23" fill="#4c4c4c" />
<rect x="715.00" y="233.85" width="5.80" height="4.90" fill="#7c7c7c" />
<path d="M715.5 234.45h4.8M715.5 236.05h4.8M715.5 237.65h4.8" stroke="#b4b4b4" stroke-width=".6"/>
<path d="M725.53 234.25 L725.53 238.25M725.53 235.45 L726.67 235.45M726.99 234.45 L728.46 234.45 L728.46 236.25 L726.99 236.25 L726.99 234.45M726.99 237.25 L728.46 237.25M727.74 236.25 L727.74 238.25M729.59 234.25 L729.59 238.25M729.59 235.45 L730.73 235.45M731.05 234.45 L732.52 234.45 L732.52 236.25 L731.05 236.25 L731.05 234.45M731.05 237.25 L732.52 237.25M731.80 236.25 L731.80 238.25M733.65 234.25 L733.65 238.25M733.65 235.45 L734.79 235.45M735.11 234.45 L736.58 234.45 L736.58 236.25 L735.11 236.25 L735.11 234.45M735.11 237.25 L736.58 237.25M735.86 236.25 L735.86 238.25M737.71 234.25 L737.71 238.25M737.71 235.45 L738.85 235.45M739.17 234.45 L740.64 234.45 L740.64 236.25 L739.17 236.25 L739.17 234.45M739.17 237.25 L740.64 237.25M739.92 236.25 L739.92 238.25" stroke="#ffffff" stroke-width="0.63" opacity="0.97" fill="none"/>
<rect x="704.10" y="240.78" width="85.40" height="7.23" fill="#535353" />
<rect x="706.50" y="242.28" width="3.90" height="3.90" fill="none" stroke="#454545" stroke-width=".65"/>
<rect x="711.60" y="240.78" width="0.50" height="7.23" fill="#4c4c4c" />
<rect x="715.00" y="241.88" width="5.80" height="4.90" fill="#7c7c7c" />
<path d="M715.5 242.48h4.8M715.5 244.08h4.8M715.5 245.68h4.8" stroke="#b4b4b4" stroke-width=".6"/>
<path d="M725.20 242.48 L728.30 242.48 L728.30 243.68 L725.20 243.68M725.20 242.48 L725.20 246.28M725.85 244.48 L728.30 244.48M726.18 245.40 L728.30 245.40M726.99 244.48 L726.34 246.28 L728.30 246.28M730.24 242.28 L729.26 244.08M729.75 243.48 L729.75 246.28M730.56 243.48 L732.52 243.48M730.73 244.88 L732.52 244.88M731.61 242.28 L731.61 246.28M734.30 242.28 L733.32 243.88 L734.46 244.28 L733.32 246.28M734.95 242.60 L736.58 242.60 L736.58 243.96 L734.95 243.96 L734.95 242.60M734.95 244.68 L734.95 246.28M734.95 244.68 L736.58 244.68 L736.58 246.28M735.77 244.68 L735.77 246.28M738.36 242.28 L737.38 244.08M737.87 243.48 L737.87 246.28M738.68 243.48 L740.64 243.48M738.85 244.88 L740.64 244.88M739.73 242.28 L739.73 246.28" stroke="#ffffff" stroke-width="0.63" opacity="0.97" fill="none"/>
<rect x="704.10" y="248.81" width="85.40" height="7.23" fill="#535353" />
<rect x="706.50" y="250.31" width="3.90" height="3.90" fill="none" stroke="#454545" stroke-width=".65"/>
<rect x="711.60" y="248.81" width="0.50" height="7.23" fill="#4c4c4c" />
<rect x="715.00" y="249.91" width="5.80" height="4.90" fill="#7c7c7c" />
<path d="M715.5 250.51h4.8M715.5 252.11h4.8M715.5 253.71h4.8" stroke="#b4b4b4" stroke-width=".6"/>
<path d="M726.83 250.31 L726.83 251.91M726.02 251.03 L728.13 251.03M725.85 251.91 L728.30 251.91M726.57 251.91 L726.18 253.11M727.55 251.91 L727.55 253.11M725.20 251.71 L725.69 252.31M725.20 253.99 L728.46 254.11M729.26 250.51 L732.36 250.51 L732.36 251.71 L729.26 251.71M729.26 250.51 L729.26 254.31M729.91 252.51 L732.36 252.51M730.24 253.43 L732.36 253.43M731.05 252.51 L730.40 254.31 L732.36 254.31M733.65 250.31 L733.65 254.31M733.65 251.51 L734.79 251.51M735.11 250.51 L736.58 250.51 L736.58 252.31 L735.11 252.31 L735.11 250.51M735.11 253.31 L736.58 253.31M735.86 252.31 L735.86 254.31M738.36 250.31 L737.38 251.91 L738.52 252.31 L737.38 254.31M739.01 250.63 L740.64 250.63 L740.64 251.99 L739.01 251.99 L739.01 250.63M739.01 252.71 L739.01 254.31M739.01 252.71 L740.64 252.71 L740.64 254.31M739.83 252.71 L739.83 254.31" stroke="#ffffff" stroke-width="0.63" opacity="0.97" fill="none"/>
<rect x="704.10" y="256.84" width="85.40" height="7.23" fill="#535353" />
<rect x="706.50" y="258.34" width="3.90" height="3.90" fill="none" stroke="#454545" stroke-width=".65"/>
<rect x="711.60" y="256.84" width="0.50" height="7.23" fill="#4c4c4c" />
<rect x="715.00" y="257.94" width="5.80" height="4.90" fill="#7c7c7c" />
<path d="M715.5 258.54h4.8M715.5 260.14h4.8M715.5 261.74h4.8" stroke="#b4b4b4" stroke-width=".6"/>
<path d="M726.83 258.34 L726.83 259.14M725.20 259.34 L728.46 259.34M725.85 259.94 L727.97 262.34M727.81 259.94 L725.69 262.34M729.26 258.34 L732.52 258.34 L732.52 262.34 L729.26 262.34 L729.26 258.34M730.24 259.46 L731.54 259.46M730.08 260.34 L731.71 261.06M730.40 261.62 L731.38 261.62M734.95 258.34 L734.95 259.94M734.14 259.06 L736.25 259.06M733.97 259.94 L736.42 259.94M734.69 259.94 L734.30 261.14M735.67 259.94 L735.67 261.14M733.32 259.74 L733.81 260.34M733.32 262.02 L736.58 262.14M738.36 258.34 L737.38 259.94 L738.52 260.34 L737.38 262.34M739.01 258.66 L740.64 258.66 L740.64 260.02 L739.01 260.02 L739.01 258.66M739.01 260.74 L739.01 262.34M739.01 260.74 L740.64 260.74 L740.64 262.34M739.83 260.74 L739.83 262.34M743.07 258.34 L743.07 259.14M741.44 259.34 L744.70 259.34M742.09 259.94 L744.21 262.34M744.05 259.94 L741.93 262.34M745.50 258.54 L748.60 258.54 L748.60 259.74 L745.50 259.74M745.50 258.54 L745.50 262.34M746.15 260.54 L748.60 260.54M746.48 261.46 L748.60 261.46M747.29 260.54 L746.64 262.34 L748.60 262.34M750.54 258.34 L749.56 260.14M750.05 259.54 L750.05 262.34M750.86 259.54 L752.82 259.54M751.03 260.94 L752.82 260.94M751.91 258.34 L751.91 262.34" stroke="#ffffff" stroke-width="0.63" opacity="0.97" fill="none"/>
<rect x="704.10" y="264.87" width="85.40" height="7.23" fill="#535353" />
<rect x="706.50" y="266.37" width="3.90" height="3.90" fill="none" stroke="#454545" stroke-width=".65"/>
<rect x="711.60" y="264.87" width="0.50" height="7.23" fill="#4c4c4c" />
<rect x="715.00" y="265.97" width="5.80" height="4.90" fill="#7c7c7c" />
<path d="M715.5 266.57h4.8M715.5 268.17h4.8M715.5 269.77h4.8" stroke="#b4b4b4" stroke-width=".6"/>
<path d="M725.20 266.57 L728.30 266.57 L728.30 267.77 L725.20 267.77M725.20 266.57 L725.20 270.37M725.85 268.57 L728.30 268.57M726.18 269.49 L728.30 269.49M726.99 268.57 L726.34 270.37 L728.30 270.37M730.89 266.37 L730.89 267.97M730.08 267.09 L732.19 267.09M729.91 267.97 L732.36 267.97M730.63 267.97 L730.24 269.17M731.61 267.97 L731.61 269.17M729.26 267.77 L729.75 268.37M729.26 270.05 L732.52 270.17M734.30 266.37 L733.32 267.97 L734.46 268.37 L733.32 270.37M734.95 266.69 L736.58 266.69 L736.58 268.05 L734.95 268.05 L734.95 266.69M734.95 268.77 L734.95 270.37M734.95 268.77 L736.58 268.77 L736.58 270.37M735.77 268.77 L735.77 270.37M739.01 266.37 L739.01 267.97M738.20 267.09 L740.31 267.09M738.03 267.97 L740.48 267.97M738.75 267.97 L738.36 269.17M739.73 267.97 L739.73 269.17M737.38 267.77 L737.87 268.37M737.38 270.05 L740.64 270.17" stroke="#ffffff" stroke-width="0.63" opacity="0.97" fill="none"/>
<rect x="704.10" y="272.90" width="85.40" height="7.23" fill="#535353" />
<rect x="706.50" y="274.40" width="3.90" height="3.90" fill="none" stroke="#454545" stroke-width=".65"/>
<rect x="711.60" y="272.90" width="0.50" height="7.23" fill="#4c4c4c" />
<rect x="715.00" y="274.00" width="5.80" height="4.90" fill="#7c7c7c" />
<path d="M715.5 274.60h4.8M715.5 276.20h4.8M715.5 277.80h4.8" stroke="#b4b4b4" stroke-width=".6"/>
<path d="M725.20 274.40 L728.46 274.40 L728.46 278.40 L725.20 278.40 L725.20 274.40M726.18 275.52 L727.48 275.52M726.02 276.40 L727.65 277.12M726.34 277.68 L727.32 277.68M730.89 274.40 L730.89 276.00M730.08 275.12 L732.19 275.12M729.91 276.00 L732.36 276.00M730.63 276.00 L730.24 277.20M731.61 276.00 L731.61 277.20M729.26 275.80 L729.75 276.40M729.26 278.08 L732.52 278.20M733.32 274.40 L736.58 274.40 L736.58 278.40 L733.32 278.40 L733.32 274.40M734.30 275.52 L735.60 275.52M734.14 276.40 L735.77 277.12M734.46 277.68 L735.44 277.68M737.38 274.40 L740.64 274.40 L740.64 278.40 L737.38 278.40 L737.38 274.40M738.36 275.52 L739.66 275.52M738.20 276.40 L739.83 277.12M738.52 277.68 L739.50 277.68" stroke="#ffffff" stroke-width="0.63" opacity="0.97" fill="none"/>
<rect x="704.10" y="280.93" width="85.40" height="7.23" fill="#535353" />
<rect x="706.50" y="282.43" width="3.90" height="3.90" fill="none" stroke="#454545" stroke-width=".65"/>
<rect x="711.60" y="280.93" width="0.50" height="7.23" fill="#4c4c4c" />
<rect x="715.00" y="282.03" width="5.80" height="4.90" fill="#7c7c7c" />
<path d="M715.5 282.63h4.8M715.5 284.23h4.8M715.5 285.83h4.8" stroke="#b4b4b4" stroke-width=".6"/>
<path d="M725.20 282.43 L728.46 282.43 L728.46 286.43 L725.20 286.43 L725.20 282.43M726.18 283.55 L727.48 283.55M726.02 284.43 L727.65 285.15M726.34 285.71 L727.32 285.71M729.26 283.23 L732.52 283.23M730.89 282.43 L730.89 286.43M729.75 284.23 L732.03 284.23 L732.03 285.63 L729.75 285.63 L729.75 284.23M733.32 282.43 L736.58 282.43 L736.58 286.43 L733.32 286.43 L733.32 282.43M734.30 283.55 L735.60 283.55M734.14 284.43 L735.77 285.15M734.46 285.71 L735.44 285.71M737.38 282.43 L740.64 282.43 L740.64 286.43 L737.38 286.43 L737.38 282.43M738.36 283.55 L739.66 283.55M738.20 284.43 L739.83 285.15M738.52 285.71 L739.50 285.71" stroke="#ffffff" stroke-width="0.63" opacity="0.97" fill="none"/>
<rect x="704.10" y="288.96" width="85.40" height="7.23" fill="#535353" />
<rect x="706.50" y="290.46" width="3.90" height="3.90" fill="none" stroke="#454545" stroke-width=".65"/>
<rect x="711.60" y="288.96" width="0.50" height="7.23" fill="#4c4c4c" />
<rect x="715.00" y="290.06" width="5.80" height="4.90" fill="#7c7c7c" />
<path d="M715.5 290.66h4.8M715.5 292.26h4.8M715.5 293.86h4.8" stroke="#b4b4b4" stroke-width=".6"/>
<path d="M725.53 290.46 L725.53 294.46M725.53 291.66 L726.67 291.66M726.99 290.66 L728.46 290.66 L728.46 292.46 L726.99 292.46 L726.99 290.66M726.99 293.46 L728.46 293.46M727.74 292.46 L727.74 294.46M730.89 290.46 L730.89 292.06M730.08 291.18 L732.19 291.18M729.91 292.06 L732.36 292.06M730.63 292.06 L730.24 293.26M731.61 292.06 L731.61 293.26M729.26 291.86 L729.75 292.46M729.26 294.14 L732.52 294.26M734.95 290.46 L734.95 291.26M733.32 291.46 L736.58 291.46M733.97 292.06 L736.09 294.46M735.93 292.06 L733.81 294.46M739.01 290.46 L739.01 291.26M737.38 291.46 L740.64 291.46M738.03 292.06 L740.15 294.46M739.99 292.06 L737.87 294.46" stroke="#ffffff" stroke-width="0.63" opacity="0.97" fill="none"/>
<rect x="704.10" y="296.99" width="85.40" height="7.23" fill="#5a6b83" />
<rect x="706.50" y="298.49" width="3.90" height="3.90" fill="none" stroke="#454545" stroke-width=".65"/>
<rect x="711.60" y="296.99" width="0.50" height="7.23" fill="#4c4c4c" />
<rect x="715.00" y="298.09" width="5.80" height="4.90" fill="#7c7c7c" />
<path d="M715.5 298.69h4.8M715.5 300.29h4.8M715.5 301.89h4.8" stroke="#b4b4b4" stroke-width=".6"/>
<path d="M725.20 298.69 L728.30 298.69 L728.30 299.89 L725.20 299.89M725.20 298.69 L725.20 302.49M725.85 300.69 L728.30 300.69M726.18 301.61 L728.30 301.61M726.99 300.69 L726.34 302.49 L728.30 302.49M729.59 298.49 L729.59 302.49M729.59 299.69 L730.73 299.69M731.05 298.69 L732.52 298.69 L732.52 300.49 L731.05 300.49 L731.05 298.69M731.05 301.49 L732.52 301.49M731.80 300.49 L731.80 302.49M733.32 298.69 L736.42 298.69 L736.42 299.89 L733.32 299.89M733.32 298.69 L733.32 302.49M733.97 300.69 L736.42 300.69M734.30 301.61 L736.42 301.61M735.11 300.69 L734.46 302.49 L736.42 302.49M737.38 298.49 L740.64 298.49 L740.64 302.49 L737.38 302.49 L737.38 298.49M738.36 299.61 L739.66 299.61M738.20 300.49 L739.83 301.21M738.52 301.77 L739.50 301.77" stroke="#ffffff" stroke-width="0.63" opacity="0.97" fill="none"/>
<rect x="789.50" y="32.00" width="4.40" height="272.60" fill="#3c3c3c" />
<rect x="790.30" y="87.50" width="2.80" height="210.50" fill="#6c6c6c" />
<path d="M790.4 35.6h2.6" stroke="#d0d0d0" stroke-width=".7"/>
<path d="M790.4 302.3h2.6" stroke="#d0d0d0" stroke-width=".7"/>
<rect x="703.80" y="304.60" width="91.20" height="7.40" fill="#535353" />
<rect x="703.80" y="304.60" width="91.20" height="0.60" fill="#464646" />
<path d="M759.2 310.2h3.6v-2.4l-1.2-1.2h-1.2M760.6 306v2.4M759.4 307.2h2.4" stroke="#c0c0c0" stroke-width=".55" fill="none"/>
<path d="M769.2 307.2h4.4v3h-4.4zM770.4 306.4h2v.8" stroke="#c0c0c0" stroke-width=".55" fill="none"/><circle cx="771.4" cy="308.7" r=".8" fill="#c0c0c0"/>
<path d="M780.6 306.9h3.6M781.4 306.9v3.4h2v-3.4M781.8 306.2h1.2" stroke="#b0b0b0" stroke-width=".55" fill="none"/>
<rect x="703.30" y="311.80" width="92.00" height="0.80" fill="#2e2e2e" />
<rect x="703.80" y="312.50" width="91.20" height="6.00" fill="#424242" />
<rect x="704.60" y="312.70" width="13.00" height="5.80" fill="#535353" />
<path d="M708.10 313.60 L708.10 315.12M707.15 314.28 L709.62 314.28M706.96 315.12 L709.81 315.12M707.80 315.12 L707.34 316.26M708.94 315.12 L708.94 316.26M706.20 314.93 L706.77 315.50M706.20 317.10 L710.00 317.21M711.18 313.60 L711.18 317.40M711.18 314.74 L712.51 314.74M712.89 313.79 L714.60 313.79 L714.60 315.50 L712.89 315.50 L712.89 313.79M712.89 316.45 L714.60 316.45M713.76 315.50 L713.76 317.40" stroke="#c8c8c8" stroke-width="0.57" opacity="0.74" fill="none"/>
<path d="M788.6 315.6 l1 -0.8 M788.6 315.6 l1 0.8 M790 314.7h3 M790 315.6h3 M790 316.5h3" stroke="#b0b0b0" stroke-width=".45"/>
<rect x="707.50" y="320.00" width="30.50" height="7.00" fill="#3b3b3b" />
<text x="708.80" y="325.20" font-size="4.4" fill="#e2e2e2" >Arial</text>
<rect x="738.00" y="320.00" width="7.00" height="7.00" fill="#616161" />
<path d="M740.60 323.10h1.8l-0.9 1.0z" fill="#d0d0d0"/>
<rect x="749.00" y="320.00" width="19.00" height="7.00" fill="#3b3b3b" />
<text x="750.20" y="325.20" font-size="4.4" fill="#e2e2e2" >Regular</text>
<rect x="768.00" y="320.00" width="7.00" height="7.00" fill="#616161" />
<path d="M770.60 323.10h1.8l-0.9 1.0z" fill="#d0d0d0"/>
<text x="705.30" y="336.80" font-size="5" fill="#c8c8c8" font-family="Liberation Serif">tT</text>
<rect x="712.00" y="331.00" width="25.00" height="6.60" fill="#3b3b3b" />
<text x="713.20" y="336.20" font-size="4.3" fill="#e2e2e2" >24</text>
<path d="M720.30 332.50 L720.30 333.98M719.45 333.17 L721.66 333.17M719.28 333.98 L721.83 333.98M720.03 333.98 L719.62 335.09M721.05 333.98 L721.05 335.09M718.60 333.80 L719.11 334.35M718.60 335.90 L722.00 336.01" stroke="#e0e0e0" stroke-width="0.57" opacity="0.81" fill="none"/>
<rect x="737.00" y="331.00" width="7.00" height="6.60" fill="#616161" />
<path d="M739.60 333.90h1.8l-0.9 1.0z" fill="#d0d0d0"/>
<text x="747.20" y="336.80" font-size="5" fill="#c8c8c8" font-family="Liberation Serif">A</text>
<rect x="754.00" y="331.00" width="21.00" height="6.60" fill="#3b3b3b" />
<path d="M756.90 332.50 L756.90 333.98M756.05 333.17 L758.26 333.17M755.88 333.98 L758.43 333.98M756.63 333.98 L756.22 335.09M757.65 333.98 L757.65 335.09M755.20 333.80 L755.71 334.35M755.20 335.90 L758.60 336.01M760.42 332.50 L759.40 334.17M759.91 333.61 L759.91 336.20M760.76 333.61 L762.80 333.61M760.93 334.90 L762.80 334.90M761.85 332.50 L761.85 336.20" stroke="#e0e0e0" stroke-width="0.57" opacity="0.81" fill="none"/>
<text x="763.40" y="336.20" font-size="4.3" fill="#e2e2e2" >(</text>
<rect x="775.00" y="331.00" width="6.00" height="6.60" fill="#616161" />
<path d="M777.10 333.90h1.8l-0.9 1.0z" fill="#d0d0d0"/>
<text x="705.20" y="345.60" font-size="3.8" fill="#b8b8b8" >VA</text>
<rect x="712.00" y="340.00" width="25.00" height="6.50" fill="#3b3b3b" />
<rect x="737.00" y="340.00" width="7.00" height="6.50" fill="#616161" />
<path d="M739.60 342.85h1.8l-0.9 1.0z" fill="#d0d0d0"/>
<text x="747.20" y="345.60" font-size="3.8" fill="#b8b8b8" >VA</text>
<rect x="754.00" y="340.00" width="21.00" height="6.50" fill="#3b3b3b" />
<text x="755.00" y="345.30" font-size="4.3" fill="#e2e2e2" >0</text>
<rect x="775.00" y="340.00" width="6.00" height="6.50" fill="#616161" />
<path d="M777.10 342.85h1.8l-0.9 1.0z" fill="#d0d0d0"/>
<path d="M705.5 352.5h4.5M705.5 355.5h4.5" stroke="#a8a8a8" stroke-width=".6"/>
<rect x="712.50" y="350.50" width="21.50" height="6.50" fill="#3b3b3b" />
<text x="713.50" y="355.50" font-size="4.3" fill="#e2e2e2" >0%</text>
<rect x="734.00" y="350.50" width="6.00" height="6.50" fill="#616161" />
<path d="M736.10 353.35h1.8l-0.9 1.0z" fill="#d0d0d0"/>
<rect x="705.00" y="358.60" width="80.00" height="0.60" fill="#474747" />
<text x="705.00" y="366.20" font-size="5" fill="#c8c8c8" font-family="Liberation Serif">IT</text>
<rect x="713.00" y="360.60" width="18.50" height="6.40" fill="#3b3b3b" />
<text x="714.00" y="365.60" font-size="4.3" fill="#e2e2e2" >100%</text>
<text x="755.00" y="366.20" font-size="5" fill="#c8c8c8" font-family="Liberation Serif">T</text>
<rect x="762.00" y="360.60" width="19.00" height="6.40" fill="#3b3b3b" />
<text x="763.00" y="365.60" font-size="4.3" fill="#e2e2e2" >100%</text>
<text x="705.00" y="374.20" font-size="4.2" fill="#b0b0b0" >A</text>
<rect x="713.00" y="368.20" width="18.50" height="6.40" fill="#3b3b3b" />
<text x="714.00" y="373.40" font-size="4.3" fill="#e2e2e2" >0</text>
<path d="M716.60 369.60 L720.00 369.60 L720.00 373.30 L716.60 373.30 L716.60 369.60M717.62 370.64 L718.98 370.64M717.45 371.45 L719.15 372.12M717.79 372.63 L718.81 372.63" stroke="#e0e0e0" stroke-width="0.57" opacity="0.81" fill="none"/>
<path d="M751.25 369.50 L750.20 371.21M750.73 370.64 L750.73 373.30M751.60 370.64 L753.70 370.64M751.78 371.97 L753.70 371.97M752.72 369.50 L752.72 373.30M754.50 369.50 L758.00 369.50 L758.00 373.30 L754.50 373.30 L754.50 369.50M755.55 370.56 L756.95 370.56M755.38 371.40 L757.12 372.08M755.73 372.62 L756.77 372.62" stroke="#e6e6e6" stroke-width="0.57" opacity="0.88" fill="none"/>
<rect x="762.50" y="369.00" width="18.70" height="6.00" fill="#f55ef0" />
<rect x="705.00" y="377.30" width="80.00" height="0.60" fill="#474747" />
<text x="713.20" y="385.40" font-size="5.6" fill="#c4c4c4" font-family="Liberation Serif">T</text>
<text x="720.20" y="385.40" font-size="5.6" fill="#c4c4c4" font-family="Liberation Serif">T</text>
<text x="727.80" y="385.40" font-size="5.6" fill="#c4c4c4" font-family="Liberation Serif">TT</text>
<text x="735.40" y="385.40" font-size="5.6" fill="#c4c4c4" font-family="Liberation Serif">Tt</text>
<text x="743.20" y="385.40" font-size="5.6" fill="#c4c4c4" font-family="Liberation Serif">T</text>
<text x="752.00" y="385.40" font-size="5.6" fill="#c4c4c4" font-family="Liberation Serif">T</text>
<text x="759.20" y="385.40" font-size="5.6" fill="#c4c4c4" font-family="Liberation Serif">T</text>
<text x="766.80" y="385.40" font-size="5.6" fill="#c4c4c4" font-family="Liberation Serif">T</text>
<rect x="705.00" y="387.60" width="80.00" height="0.60" fill="#474747" />
<rect x="711.00" y="390.00" width="8.00" height="7.00" fill="#3a3a3a" />
<text x="713.00" y="395.60" font-size="4.6" fill="#d8d8d8" font-family="Liberation Serif">fi</text>
<text x="721.30" y="395.60" font-size="4.6" fill="#9a9a9a" font-family="Liberation Serif">o</text>
<text x="729.30" y="395.60" font-size="4.6" fill="#9a9a9a" font-family="Liberation Serif">st</text>
<text x="737.30" y="395.60" font-size="4.6" fill="#9a9a9a" font-family="Liberation Serif">A</text>
<text x="745.50" y="395.60" font-size="4.6" fill="#9a9a9a" font-family="Liberation Serif">ad</text>
<text x="754.10" y="395.60" font-size="4.6" fill="#9a9a9a" font-family="Liberation Serif">T</text>
<text x="761.70" y="395.60" font-size="4.6" fill="#9a9a9a" font-family="Liberation Serif">1st</text>
<text x="770.10" y="395.60" font-size="4.6" fill="#9a9a9a" font-family="Liberation Serif">½</text>
<rect x="707.00" y="401.00" width="46.00" height="6.50" fill="#5e5e5e" />
<path d="M709.15 402.40 L709.15 406.20M709.15 403.54 L710.38 403.54M710.73 402.59 L712.30 402.59 L712.30 404.30 L710.73 404.30 L710.73 402.59M710.73 405.25 L712.30 405.25M711.53 404.30 L711.53 406.20M713.10 402.40 L716.60 402.40 L716.60 406.20 L713.10 406.20 L713.10 402.40M714.15 403.46 L715.55 403.46M713.98 404.30 L715.73 404.98M714.33 405.52 L715.38 405.52M719.15 402.40 L719.15 403.92M718.28 403.08 L720.55 403.08M718.10 403.92 L720.73 403.92M718.87 403.92 L718.45 405.06M719.92 403.92 L719.92 405.06M717.40 403.73 L717.93 404.30M717.40 405.90 L720.90 406.01M721.70 402.40 L725.20 402.40 L725.20 406.20 L721.70 406.20 L721.70 402.40M722.75 403.46 L724.15 403.46M722.58 404.30 L724.33 404.98M722.93 405.52 L723.98 405.52" stroke="#e6e6e6" stroke-width="0.57" opacity="0.81" fill="none"/>
<path d="M751.2 403.2l-1.2 1 1.2 1z" fill="#cfcfcf"/>
<text x="756.20" y="406.00" font-size="3.3" fill="#a8a8a8" >aa</text>
<rect x="764.00" y="401.00" width="18.00" height="6.50" fill="#5e5e5e" />
<path d="M765.95 402.40 L765.95 406.20M765.95 403.54 L767.18 403.54M767.52 402.59 L769.10 402.59 L769.10 404.30 L767.52 404.30 L767.52 402.59M767.52 405.25 L769.10 405.25M768.33 404.30 L768.33 406.20M771.65 402.40 L771.65 403.16M769.90 403.35 L773.40 403.35M770.60 403.92 L772.88 406.20M772.70 403.92 L770.42 406.20" stroke="#e6e6e6" stroke-width="0.57" opacity="0.81" fill="none"/>
<path d="M779.6 403.2l1.2 1 -1.2 1z" fill="#cfcfcf"/>
<rect x="703.30" y="409.80" width="92.00" height="0.80" fill="#2e2e2e" />
<rect x="703.80" y="410.60" width="91.20" height="6.40" fill="#424242" />
<rect x="704.60" y="410.80" width="13.00" height="6.20" fill="#535353" />
<path d="M706.58 411.90 L706.58 415.70M706.58 413.04 L707.91 413.04M708.29 412.09 L710.00 412.09 L710.00 413.80 L708.29 413.80 L708.29 412.09M708.29 414.75 L710.00 414.75M709.16 413.80 L709.16 415.70M712.70 411.90 L712.70 413.42M711.75 412.58 L714.22 412.58M711.56 413.42 L714.41 413.42M712.40 413.42 L711.94 414.56M713.54 413.42 L713.54 414.56M710.80 413.23 L711.37 413.80M710.80 415.40 L714.60 415.51" stroke="#c8c8c8" stroke-width="0.57" opacity="0.74" fill="none"/>
<path d="M788.6 413.8 l1 -0.8 M788.6 413.8 l1 0.8 M790 412.9h3 M790 413.8h3 M790 414.7h3" stroke="#b0b0b0" stroke-width=".45"/>
<rect x="720.50" y="420.00" width="7.00" height="7.00" fill="#3a3a3a" />
<path d="M712.7 421.4h4.6M712.7 423h4.6M712.7 424.6h4.6M712.7 426.2h4.6" stroke="#a8a8a8" stroke-width=".5"/>
<path d="M721.7 421.4h4.6M721.7 423h4.6M721.7 424.6h4.6M721.7 426.2h4.6" stroke="#a8a8a8" stroke-width=".5"/>
<path d="M730.2 421.4h4.6M730.2 423h4.6M730.2 424.6h4.6M730.2 426.2h4.6" stroke="#a8a8a8" stroke-width=".5"/>
<path d="M741.7 421.4h4.6M741.7 423h4.6M741.7 424.6h4.6M741.7 426.2h4.6" stroke="#a8a8a8" stroke-width=".5"/>
<path d="M750.2 421.4h4.6M750.2 423h4.6M750.2 424.6h4.6M750.2 426.2h4.6" stroke="#a8a8a8" stroke-width=".5"/>
<path d="M758.7 421.4h4.6M758.7 423h4.6M758.7 424.6h4.6M758.7 426.2h4.6" stroke="#a8a8a8" stroke-width=".5"/>
<path d="M770.7 421.4h4.6M770.7 423h4.6M770.7 424.6h4.6M770.7 426.2h4.6" stroke="#a8a8a8" stroke-width=".5"/>
<rect x="705.00" y="429.10" width="80.00" height="0.60" fill="#474747" />
<path d="M707 434.5h5M710 432.4v4.2" stroke="#a8a8a8" stroke-width=".55"/>
<rect x="715.00" y="431.50" width="18.80" height="6.00" fill="#3b3b3b" />
<ellipse cx="716.50" cy="434.50" rx=".7" ry="1.4" fill="none" stroke="#8fa8d0" stroke-width=".4"/>
<text x="717.80" y="436.20" font-size="3.5" fill="#d8d8d8" >0</text>
<path d="M721.16 432.80 L720.20 434.42M720.68 433.88 L720.68 436.40M721.48 433.88 L723.40 433.88M721.64 435.14 L723.40 435.14M722.50 432.80 L722.50 436.40" stroke="#e0e0e0" stroke-width="0.57" opacity="0.74" fill="none"/>
<path d="M747 434.5h5M749 432.4v4.2" stroke="#a8a8a8" stroke-width=".55"/>
<rect x="754.50" y="431.50" width="18.80" height="6.00" fill="#3b3b3b" />
<ellipse cx="756.00" cy="434.50" rx=".7" ry="1.4" fill="none" stroke="#8fa8d0" stroke-width=".4"/>
<text x="757.30" y="436.20" font-size="3.5" fill="#d8d8d8" >0</text>
<path d="M760.66 432.80 L759.70 434.42M760.18 433.88 L760.18 436.40M760.98 433.88 L762.90 433.88M761.14 435.14 L762.90 435.14M762.00 432.80 L762.00 436.40" stroke="#e0e0e0" stroke-width="0.57" opacity="0.74" fill="none"/>
<path d="M707.6 441.6h1.6M709 443h3M709 444.6h3" stroke="#a8a8a8" stroke-width=".55"/>
<rect x="715.00" y="440.00" width="18.80" height="6.00" fill="#3b3b3b" />
<ellipse cx="716.50" cy="443.00" rx=".7" ry="1.4" fill="none" stroke="#8fa8d0" stroke-width=".4"/>
<text x="717.80" y="444.70" font-size="3.5" fill="#d8d8d8" >0</text>
<path d="M720.20 442.02 L723.40 442.02M721.80 441.30 L721.80 444.90M720.68 442.92 L722.92 442.92 L722.92 444.18 L720.68 444.18 L720.68 442.92" stroke="#e0e0e0" stroke-width="0.57" opacity="0.74" fill="none"/>
<rect x="705.00" y="447.70" width="80.00" height="0.60" fill="#474747" />
<path d="M707 451.4h5M708.2 453h3.6M708.2 454.6h3.6" stroke="#a8a8a8" stroke-width=".55"/>
<rect x="715.00" y="450.00" width="18.80" height="6.00" fill="#3b3b3b" />
<ellipse cx="716.50" cy="453.00" rx=".7" ry="1.4" fill="none" stroke="#8fa8d0" stroke-width=".4"/>
<text x="717.80" y="454.70" font-size="3.5" fill="#d8d8d8" >0</text>
<path d="M720.20 451.30 L723.40 451.30 L723.40 454.90 L720.20 454.90 L720.20 451.30M721.16 452.31 L722.44 452.31M721.00 453.10 L722.60 453.75M721.32 454.25 L722.28 454.25" stroke="#e0e0e0" stroke-width="0.57" opacity="0.74" fill="none"/>
<path d="M747 455.2h5M748.2 451.8h3.6M748.2 453.4h3.6" stroke="#a8a8a8" stroke-width=".55"/>
<rect x="754.50" y="450.00" width="18.80" height="6.00" fill="#3b3b3b" />
<ellipse cx="756.00" cy="453.00" rx=".7" ry="1.4" fill="none" stroke="#8fa8d0" stroke-width=".4"/>
<text x="757.30" y="454.70" font-size="3.5" fill="#d8d8d8" >0</text>
<path d="M760.02 451.30 L760.02 454.90M760.02 452.38 L761.14 452.38M761.46 451.48 L762.90 451.48 L762.90 453.10 L761.46 453.10 L761.46 451.48M761.46 454.00 L762.90 454.00M762.20 453.10 L762.20 454.90" stroke="#e0e0e0" stroke-width="0.57" opacity="0.74" fill="none"/>
<path d="M709.27 461.40 L708.20 462.96 L709.44 463.35 L708.20 465.30M709.98 461.71 L711.75 461.71 L711.75 463.04 L709.98 463.04 L709.98 461.71M709.98 463.74 L709.98 465.30M709.98 463.74 L711.75 463.74 L711.75 465.30M710.86 463.74 L710.86 465.30M712.55 462.18 L716.10 462.18M714.33 461.40 L714.33 465.30M713.08 463.15 L715.57 463.15 L715.57 464.52 L713.08 464.52 L713.08 463.15M718.68 461.40 L718.68 462.96M717.79 462.10 L720.10 462.10M717.61 462.96 L720.27 462.96M718.39 462.96 L717.97 464.13M719.46 462.96 L719.46 464.13M716.90 462.76 L717.43 463.35M716.90 464.99 L720.45 465.10M722.32 461.40 L721.25 463.15M721.78 462.57 L721.78 465.30M722.67 462.57 L724.80 462.57M722.85 463.94 L724.80 463.94M723.81 461.40 L723.81 465.30M725.60 462.18 L729.15 462.18M727.38 461.40 L727.38 465.30M726.13 463.15 L728.62 463.15 L728.62 464.52 L726.13 464.52 L726.13 463.15M730.31 461.40 L730.31 465.30M730.31 462.57 L731.55 462.57M731.90 461.59 L733.50 461.59 L733.50 463.35 L731.90 463.35 L731.90 461.59M731.90 464.32 L733.50 464.32M732.72 463.35 L732.72 465.30M734.30 462.18 L737.85 462.18M736.08 461.40 L736.08 465.30M734.83 463.15 L737.32 463.15 L737.32 464.52 L734.83 464.52 L734.83 463.15" stroke="#e6e6e6" stroke-width="0.57" opacity="0.81" fill="none"/>
<text x="739.60" y="465.40" font-size="3.6" fill="#cfcfcf" >:</text>
<rect x="743.30" y="460.20" width="37.70" height="6.80" fill="#5e5e5e" />
<path d="M746.22 461.70 L745.20 463.41M745.71 462.84 L745.71 465.50M746.56 462.84 L748.60 462.84M746.73 464.17 L748.60 464.17M747.65 461.70 L747.65 465.50" stroke="#f0f0f0" stroke-width="0.57" opacity="0.88" fill="none"/>
<path d="M777.8 463l0.6 1.2 0.6 -1.2z" fill="#cfcfcf"/>
<path d="M713.87 470.70 L712.80 472.26 L714.04 472.65 L712.80 474.60M714.58 471.01 L716.35 471.01 L716.35 472.34 L714.58 472.34 L714.58 471.01M714.58 473.04 L714.58 474.60M714.58 473.04 L716.35 473.04 L716.35 474.60M715.46 473.04 L715.46 474.60M718.22 470.70 L717.15 472.26 L718.39 472.65 L717.15 474.60M718.93 471.01 L720.70 471.01 L720.70 472.34 L718.93 472.34 L718.93 471.01M718.93 473.04 L718.93 474.60M718.93 473.04 L720.70 473.04 L720.70 474.60M719.81 473.04 L719.81 474.60M722.57 470.70 L721.50 472.26 L722.74 472.65 L721.50 474.60M723.28 471.01 L725.05 471.01 L725.05 472.34 L723.28 472.34 L723.28 471.01M723.28 473.04 L723.28 474.60M723.28 473.04 L725.05 473.04 L725.05 474.60M724.16 473.04 L724.16 474.60M727.62 470.70 L727.62 471.48M725.85 471.68 L729.40 471.68M726.56 472.26 L728.87 474.60M728.69 472.26 L726.38 474.60M731.27 470.70 L730.20 472.26 L731.44 472.65 L730.20 474.60M731.98 471.01 L733.75 471.01 L733.75 472.34 L731.98 472.34 L731.98 471.01M731.98 473.04 L731.98 474.60M731.98 473.04 L733.75 473.04 L733.75 474.60M732.86 473.04 L732.86 474.60M734.91 470.70 L734.91 474.60M734.91 471.87 L736.15 471.87M736.50 470.89 L738.10 470.89 L738.10 472.65 L736.50 472.65 L736.50 470.89M736.50 473.62 L738.10 473.62M737.32 472.65 L737.32 474.60" stroke="#e6e6e6" stroke-width="0.57" opacity="0.81" fill="none"/>
<text x="739.60" y="474.80" font-size="3.6" fill="#cfcfcf" >:</text>
<rect x="743.30" y="469.60" width="37.70" height="6.70" fill="#5e5e5e" />
<path d="M746.22 471.10 L745.20 472.62 L746.39 473.00 L745.20 474.90M746.90 471.40 L748.60 471.40 L748.60 472.70 L746.90 472.70 L746.90 471.40M746.90 473.38 L746.90 474.90M746.90 473.38 L748.60 473.38 L748.60 474.90M747.75 473.38 L747.75 474.90" stroke="#f0f0f0" stroke-width="0.57" opacity="0.88" fill="none"/>
<path d="M777.8 472.4l0.6 1.2 0.6 -1.2z" fill="#cfcfcf"/>
<rect x="709.60" y="481.80" width="3.20" height="3.20" fill="#484848" />
<path d="M714.93 481.40 L714.93 485.20M714.93 482.54 L716.09 482.54M716.42 481.59 L717.90 481.59 L717.90 483.30 L716.42 483.30 L716.42 481.59M716.42 484.25 L717.90 484.25M717.17 483.30 L717.17 485.20M720.35 481.40 L720.35 482.92M719.53 482.08 L721.67 482.08M719.36 482.92 L721.84 482.92M720.09 482.92 L719.69 484.06M721.08 482.92 L721.08 484.06M718.70 482.73 L719.20 483.30M718.70 484.90 L722.00 485.01" stroke="#e6e6e6" stroke-width="0.57" opacity="0.74" fill="none"/>
<rect x="9.50" y="27.60" width="7.00" height="0.50" fill="#6a6a6a" />
<rect x="1.80" y="23.10" width="2.20" height="1.60" fill="#9a9a9a" />
<rect x="13.10" y="32.10" width="10.40" height="7.70" fill="#393939" />
<rect x="1.50" y="59.20" width="22.00" height="0.60" fill="#444" />
<rect x="1.50" y="96.30" width="22.00" height="0.60" fill="#444" />
<rect x="1.50" y="115.20" width="22.00" height="0.60" fill="#444" />
<rect x="3.9999999999999996" y="32.699999999999996" width="5.2" height="5.2" fill="none" stroke="#c4c4c4" stroke-width=".55" stroke-dasharray="1 .8"/>
<rect x="10.00" y="38.50" width="1.00" height="1.00" fill="#d0d0d0" />
<path d="M14.3 33.099999999999994 L14.3 37.3 L17.3 35.3 Z" fill="#d8d8d8"/><path d="M19.900000000000002 33.5v3.8M18.0 35.4h3.8" stroke="#d8d8d8" stroke-width=".7"/>
<ellipse cx="6.6" cy="44.4" rx="3" ry="2" fill="none" stroke="#c4c4c4" stroke-width=".6"/><path d="M5.1 46q-.5 1.5 .8 2.4" stroke="#c4c4c4" stroke-width=".5" fill="none"/>
<rect x="10.00" y="48.20" width="1.00" height="1.00" fill="#d0d0d0" />
<path d="M15.3 47.5 L21.3 42.5" stroke="#c4c4c4" stroke-width="1.3"/><ellipse cx="18.3" cy="44" rx="2.6" ry="1.6" fill="none" stroke="#c4c4c4" stroke-width=".45"/>
<rect x="21.70" y="48.20" width="1.00" height="1.00" fill="#d0d0d0" />
<path d="M4.6 51v5h5M3.3999999999999995 52.2h5v5" stroke="#c4c4c4" stroke-width=".7" fill="none"/>
<rect x="10.00" y="57.20" width="1.00" height="1.00" fill="#d0d0d0" />
<path d="M15.3 57 L20.900000000000002 51.4" stroke="#c4c4c4" stroke-width=".9"/><circle cx="20.3" cy="52" r="1.1" fill="#c4c4c4"/>
<rect x="21.70" y="57.20" width="1.00" height="1.00" fill="#d0d0d0" />
<ellipse cx="6.6" cy="65.2" rx="2.8" ry="2.2" fill="#c4c4c4" opacity=".8"/>
<rect x="10.00" y="68.40" width="1.00" height="1.00" fill="#d0d0d0" />
<path d="M15.100000000000001 67.8 L21.3 62.2" stroke="#c4c4c4" stroke-width=".7"/><path d="M14.8 68.0q1.4-2.6 2.6-1.4z" fill="#c4c4c4"/>
<rect x="21.70" y="68.40" width="1.00" height="1.00" fill="#d0d0d0" />
<rect x="5.699999999999999" y="71.2" width="1.8" height="3" fill="#c4c4c4"/><rect x="3.5999999999999996" y="74.2" width="6" height="2.4" fill="#c4c4c4"/>
<rect x="10.00" y="77.40" width="1.00" height="1.00" fill="#d0d0d0" />
<path d="M15.100000000000001 76.8 L21.3 71.2M15.700000000000001 72.4l1.6-1" stroke="#c4c4c4" stroke-width=".7"/>
<rect x="21.70" y="77.40" width="1.00" height="1.00" fill="#d0d0d0" />
<path d="M3.5999999999999996 84.0 L7.199999999999999 80.0 L9.6 82.2 L6.0 85.8z" fill="#c4c4c4" opacity=".85"/>
<rect x="10.00" y="86.00" width="1.00" height="1.00" fill="#d0d0d0" />
<defs><linearGradient id="tgr"><stop offset="0" stop-color="#333"/><stop offset="1" stop-color="#ddd"/></linearGradient></defs><rect x="15.3" y="80.39999999999999" width="6" height="4.8" fill="url(#tgr)" stroke="#c4c4c4" stroke-width=".4"/>
<rect x="21.70" y="86.00" width="1.00" height="1.00" fill="#d0d0d0" />
<path d="M6.6 88.5 Q9.2 92.1 8.2 93.7 Q6.6 94.7 5.0 93.7 Q3.9999999999999996 92.1 6.6 88.5z" fill="#c4c4c4" opacity=".85"/>
<rect x="10.00" y="94.70" width="1.00" height="1.00" fill="#d0d0d0" />
<ellipse cx="18.3" cy="91.5" rx="2.8" ry="2.2" fill="none" stroke="#c4c4c4" stroke-width=".8"/><path d="M20.1 93.1l1.6 1.4" stroke="#c4c4c4" stroke-width=".8"/>
<rect x="21.70" y="94.70" width="1.00" height="1.00" fill="#d0d0d0" />
<path d="M3.5999999999999996 104.6 L5.0 101.0 L8.6 98.6 L7.199999999999999 103.0z" fill="#c4c4c4" opacity=".85"/>
<rect x="10.00" y="104.80" width="1.00" height="1.00" fill="#d0d0d0" />
<text x="16.10" y="104.40" font-size="6.2" fill="#c4c4c4" font-family="Liberation Serif">T</text>
<rect x="21.70" y="104.80" width="1.00" height="1.00" fill="#d0d0d0" />
<path d="M4.199999999999999 107.6 L4.199999999999999 113.19999999999999 L5.8 111.8 L7.199999999999999 113.6 L7.8 113.0 L6.6 111.39999999999999 L8.6 111.19999999999999z" fill="#c4c4c4"/>
<rect x="10.00" y="113.80" width="1.00" height="1.00" fill="#d0d0d0" />
<path d="M15.3 111.6 Q16.3 107.6 18.900000000000002 108.39999999999999 Q21.5 108.0 21.1 111.0 Q20.5 113.39999999999999 17.900000000000002 112.8 Q15.3 113.6 15.3 111.6z" fill="#c4c4c4" opacity=".8"/>
<rect x="21.70" y="113.80" width="1.00" height="1.00" fill="#d0d0d0" />
<path d="M3.9999999999999996 120.6 Q4.199999999999999 117.6 6.6 117.8 Q9.399999999999999 118.0 9.0 121.19999999999999 Q8.6 123.6 6.3999999999999995 123.6 Q3.8 123.19999999999999 3.9999999999999996 120.6z" fill="#c4c4c4" opacity=".85"/>
<rect x="10.00" y="123.80" width="1.00" height="1.00" fill="#d0d0d0" />
<circle cx="17.7" cy="119.8" r="2.1" fill="none" stroke="#c4c4c4" stroke-width=".7"/><path d="M19.2 121.39999999999999l2.2 2.2" stroke="#c4c4c4" stroke-width="1"/>
<rect x="10.00" y="132.80" width="8.70" height="8.70" fill="#ffffff" stroke="#333" stroke-width=".3"/>
<rect x="4.90" y="127.20" width="8.40" height="8.10" fill="#f75cf0" stroke="#333" stroke-width=".3"/>
<path d="M3.9 137.6h2.4v2.2h-2.4z" fill="#222" stroke="#ccc" stroke-width=".35"/>
<path d="M15.6 125.8q2 0 2 2.2M17.2 125.5l-1.2.4.4 1.1" stroke="#bbb" stroke-width=".45" fill="none"/>
<rect x="3.40" y="146.40" width="6.60" height="4.40" fill="none" stroke="#b8b8b8" stroke-width=".5"/>
<circle cx="6.7" cy="148.6" r="1.2" fill="none" stroke="#b8b8b8" stroke-width=".5"/>
<rect x="15.00" y="146.20" width="6.20" height="4.60" fill="none" stroke="#b8b8b8" stroke-width=".5"/>
<rect x="16.20" y="145.40" width="5.60" height="3.80" fill="none" stroke="#999" stroke-width=".4"/>
<rect x="26.00" y="483.70" width="671.00" height="5.40" fill="#3b3b3b" />
<rect x="26.20" y="483.80" width="15.80" height="5.20" fill="#363636" />
<rect x="42.50" y="483.80" width="7.40" height="5.20" fill="#474747" />
<rect x="50.40" y="483.80" width="60.20" height="5.20" fill="#4a4a4a" />
<rect x="110.80" y="483.80" width="4.00" height="5.20" fill="#525252" />
<text x="27.20" y="488.30" font-size="4.2" fill="#e0e0e0" >100%</text>
<circle cx="46.3" cy="486.4" r="1.7" fill="#e0e0e0"/><path d="M46.3 485.4v1.1l.8.5" stroke="#666" stroke-width=".35" fill="none"/>
<path d="M64.82 484.50 L63.80 486.02 L64.99 486.40 L63.80 488.30M65.50 484.80 L67.20 484.80 L67.20 486.10 L65.50 486.10 L65.50 484.80M65.50 486.78 L65.50 488.30M65.50 486.78 L67.20 486.78 L67.20 488.30M66.35 486.78 L66.35 488.30M69.02 484.50 L68.00 486.02 L69.19 486.40 L68.00 488.30M69.70 484.80 L71.40 484.80 L71.40 486.10 L69.70 486.10 L69.70 484.80M69.70 486.78 L69.70 488.30M69.70 486.78 L71.40 486.78 L71.40 488.30M70.55 486.78 L70.55 488.30" stroke="#f0f0f0" stroke-width="0.57" opacity="0.94" fill="none"/>
<text x="72.20" y="488.20" font-size="4.1" fill="#d8d8d8" >:3.00M/7.87M</text>
<path d="M112.2 485.4l1.3 1.1 -1.3 1.1z" fill="#e8e8e8"/>
<rect x="698.00" y="47.00" width="13.20" height="17.50" fill="#535353" stroke="#2e2e2e" stroke-width=".5"/>
<rect x="698.00" y="47.00" width="13.20" height="3.50" fill="#3a3a3a" />
<path d="M700.2 48.8h1.8M708 48.2h1.6v1.4h-1.6z" stroke="#9a9a9a" stroke-width=".45" fill="none"/>
<path d="M700.4 52.9h8" stroke="#7a7a7a" stroke-width=".5" stroke-dasharray=".8 .5"/>
<path d="M702.55 56.40 L702.55 57.08M701.00 57.25 L704.10 57.25M701.62 57.76 L703.63 59.80M703.48 57.76 L701.47 59.80M706.45 56.40 L706.45 57.08M704.90 57.25 L708.00 57.25M705.52 57.76 L707.53 59.80M707.38 57.76 L705.37 59.80" stroke="#e6e6e6" stroke-width="0.57" opacity="0.88" fill="none"/>
<rect x="701.20" y="60.80" width="6.00" height="1.10" fill="#d6d6d6" />
<rect x="105.00" y="489.90" width="22.00" height="2.10" fill="#dce8f4" opacity=".8"/>
<rect x="128.00" y="489.90" width="21.00" height="2.10" fill="#dce8f4" opacity=".8"/>
<rect x="150.00" y="489.90" width="20.00" height="2.10" fill="#dce8f4" opacity=".8"/>
<rect x="172.00" y="489.90" width="21.00" height="2.10" fill="#dce8f4" opacity=".8"/>
<rect x="194.00" y="489.90" width="18.00" height="2.10" fill="#dce8f4" opacity=".8"/>
<path d="M625.6 470 Q625.6 459.2 640 459.1 L643 459.1 Q649.5 459.2 652.2 463.8 L652.2 470z" fill="#fac3db" stroke="#c08a7a" stroke-width=".45"/>
<rect x="625.8" y="463.5" width="56.3" height="25.1" rx="8.6" ry="8.6" fill="#ffffff" stroke="#b98070" stroke-width=".55"/>
<path d="M630.6 470.4h6v3.6h-6z" fill="none" stroke="#ef7ba2" stroke-width="1.5"/><path d="M633.6 468v8.2" stroke="#ef7ba2" stroke-width="1.6"/>
<path d="M643.2 469.6l1.2-1.4M647.2 469.6l1.2-1.4" stroke="#ef7ba2" stroke-width="1"/><path d="M643.8 476.2V470.6h6.2V476.2" fill="none" stroke="#ef7ba2" stroke-width="1.4"/><path d="M645.7 472.3h2.4v2.3h-2.4z" fill="#ef7ba2"/>
<path d="M630.4 481.4h7.4M631 483.6h6.2M634.1 478v7.8M631.6 478.6l.8 1.4M636.6 478.6l-.8 1.4" stroke="#ef7ba2" stroke-width="1.4"/>
<path d="M646.8 485.6 C643 483 642.5 481.4 642.5 480.3 C642.5 478.9 643.6 478.2 644.6 478.2 C645.6 478.2 646.4 478.8 646.8 479.6 C647.2 478.8 648 478.2 649 478.2 C650 478.2 651.1 478.9 651.1 480.3 C651.1 481.4 650.6 483 646.8 485.6z" fill="#ef7ba2"/>
<circle cx="659.2" cy="472.5" r="4.2" fill="#9b4a22"/><circle cx="673.2" cy="472.5" r="4.15" fill="#9b4a22"/>
<circle cx="661" cy="472.6" r=".75" fill="#fff"/><circle cx="658.2" cy="474.4" r=".4" fill="#fff"/><circle cx="671.6" cy="472.6" r=".7" fill="#fff"/><circle cx="674.6" cy="474.3" r=".35" fill="#fff"/>
<ellipse cx="656.8" cy="477.8" rx="2.6" ry="1.4" fill="#f27e9e"/><ellipse cx="677" cy="477.4" rx="2.6" ry="1.4" fill="#f27e9e"/>
<path d="M664.9 477.2 L666.4 476 L667.9 477.2 L667.3 482.6 Q666.4 483.8 665.5 482.6z" fill="#f39ab0"/><path d="M665 477.2l1.4-1.2 1.4 1.2" stroke="#b57060" stroke-width=".35" fill="none"/></svg>
</body></html>
